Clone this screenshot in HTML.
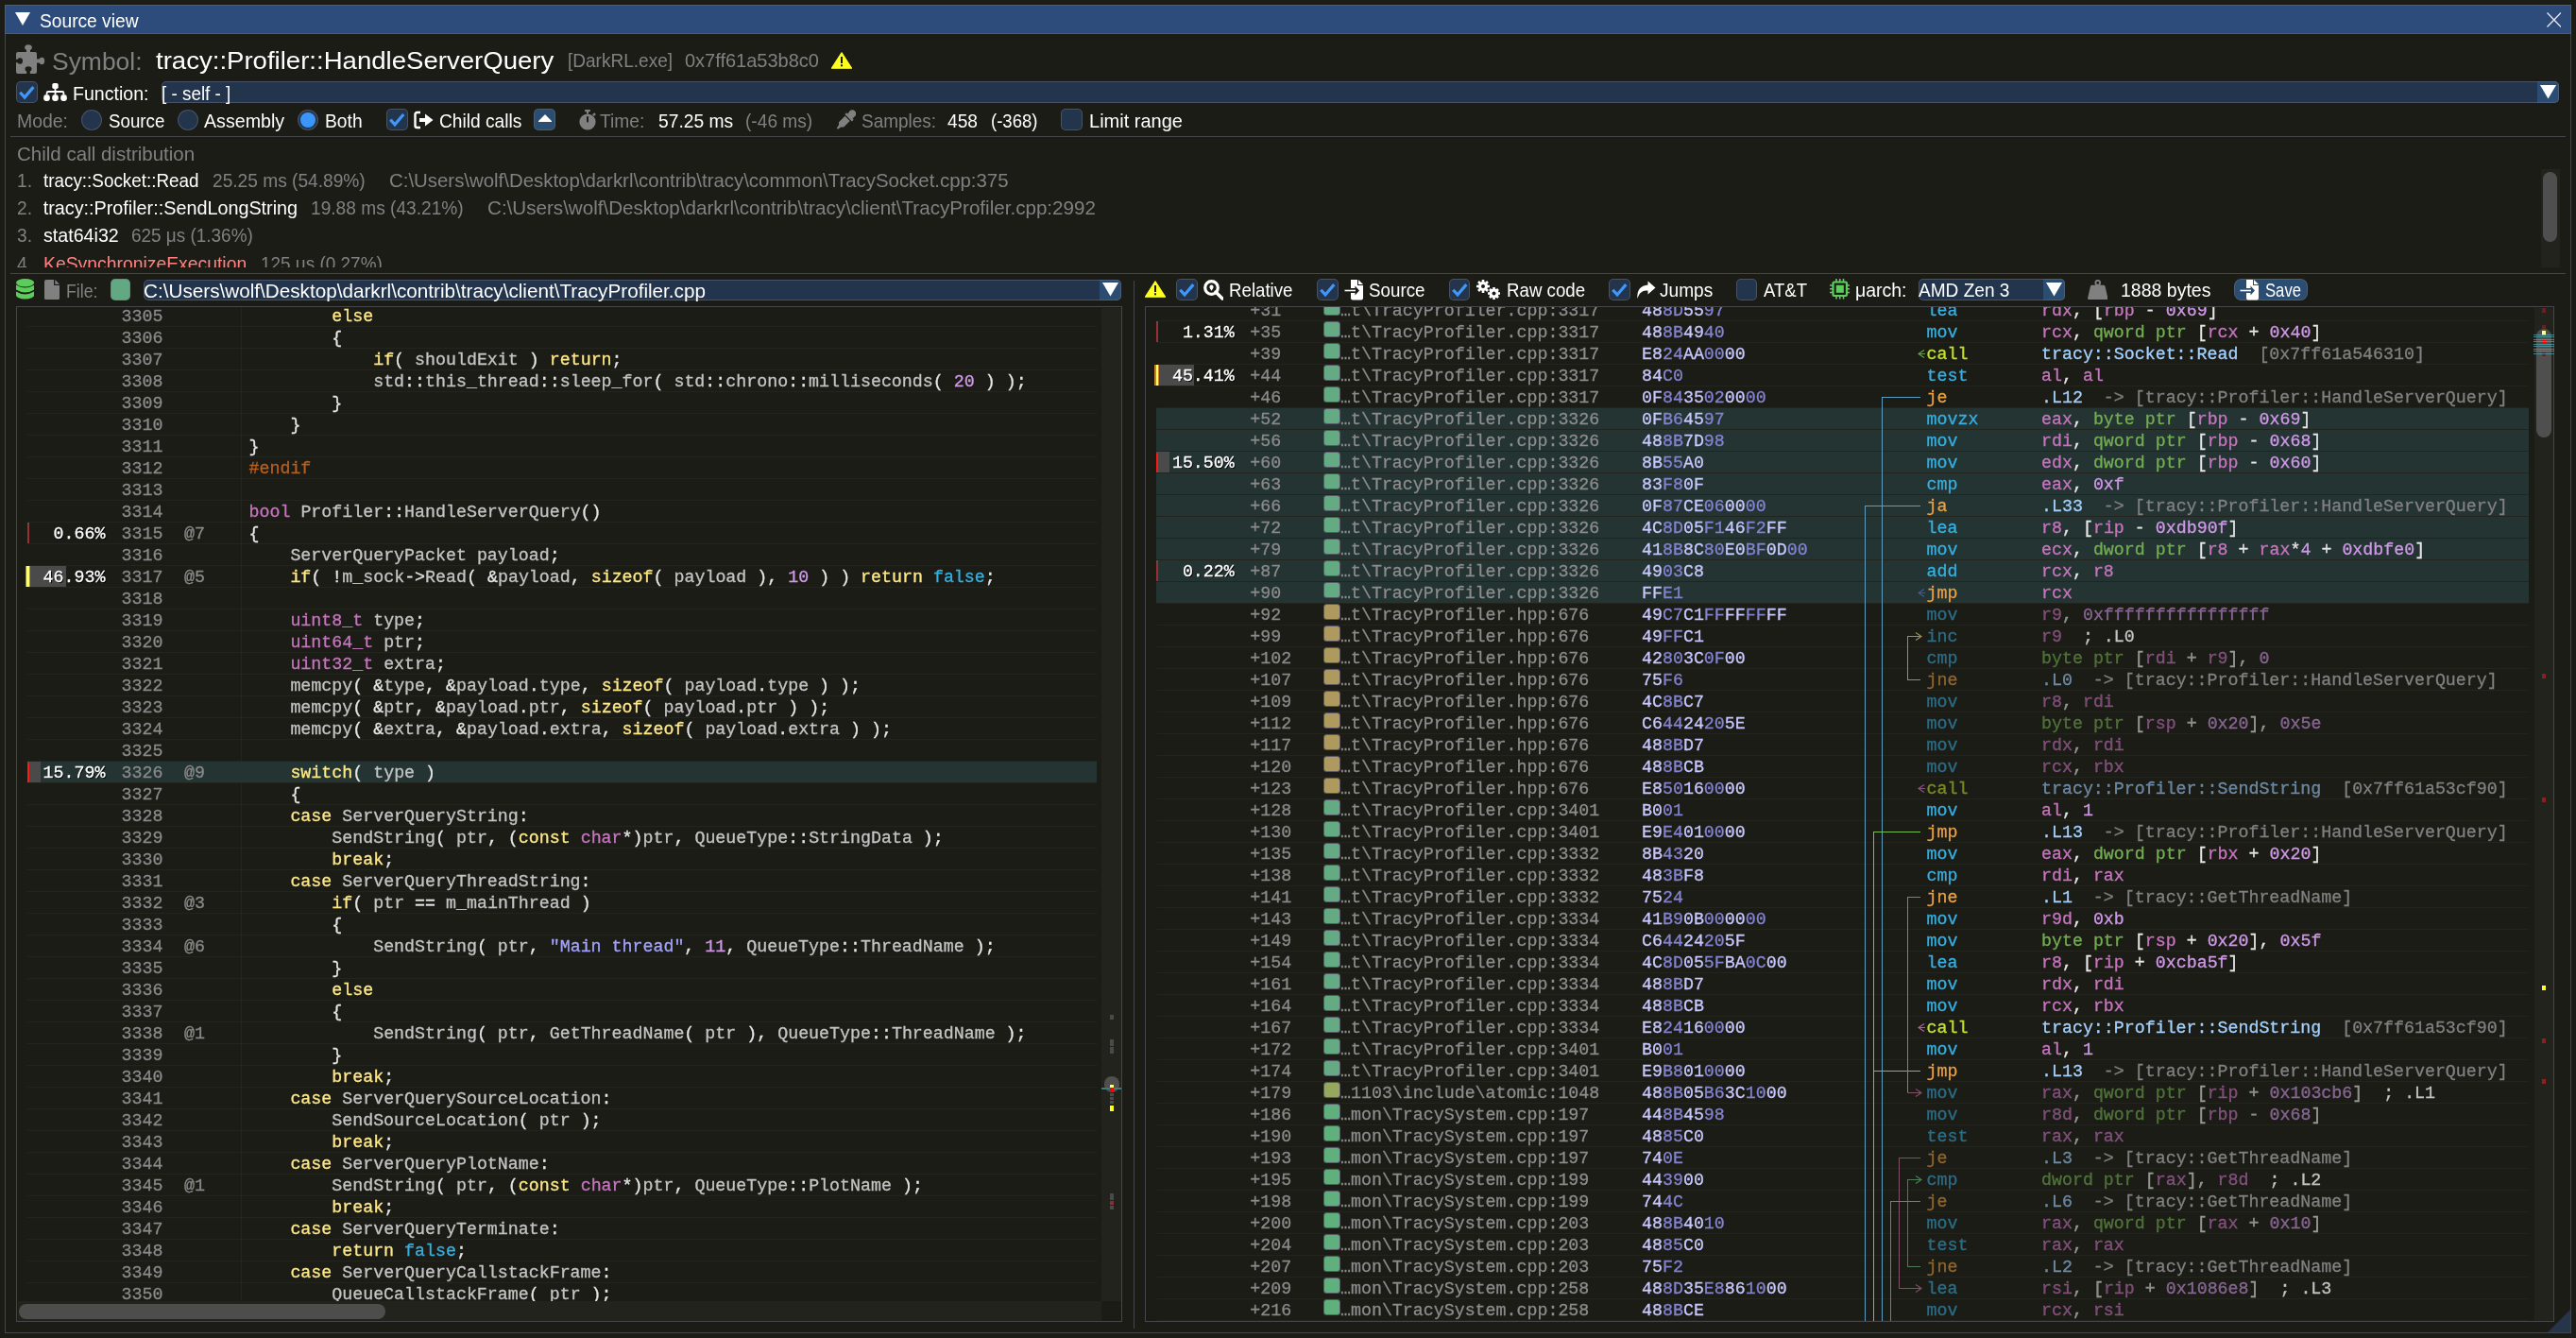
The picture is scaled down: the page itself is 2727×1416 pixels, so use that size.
<!DOCTYPE html><html><head><meta charset="utf-8"><style>
*{margin:0;padding:0}
html,body{width:2727px;height:1416px;overflow:hidden;background:#1c1c17}
body{position:relative}
div{position:absolute}
.s{font-family:"Liberation Sans",sans-serif;line-height:1;white-space:pre;transform-origin:0 0}
.m{font-family:"Liberation Mono",monospace;font-size:18.3px;line-height:1;white-space:pre;-webkit-text-stroke:0.3px}
.pc{font-family:"Liberation Mono",monospace;font-size:18.3px;line-height:1;white-space:pre;color:#fff;text-shadow:1px 1px 0 #000;-webkit-text-stroke:0.3px}
</style></head><body><div id="root" style="left:0;top:0;width:2727px;height:1416px;will-change:transform;overflow:hidden"><div style="left:0;top:0;width:2727px;height:1416px;background:#1c1c17"></div><div style="left:5.00px;top:5.00px;width:2717.00px;height:31.00px;background:#2d4b7b;"></div>
<div style="left:6.00px;top:35.00px;width:2715.00px;height:1.00px;background:rgba(110,110,128,0.5);"></div>
<div style="left:5.00px;top:5.00px;width:2717.00px;height:1406.00px;border:1px solid rgba(110,110,128,0.5);box-sizing:border-box"></div>
<svg style="position:absolute;left:16.00px;top:13.00px;" width="16.00" height="14.00" viewBox="0 0 16 14"><polygon points="0,0 16,0 8,14" fill="#fff"/></svg>
<div id="t0" class="s" style="left:42.00px;top:13.04px;font-size:19.8px;color:#fff;transform:scaleX(0.9698);">Source view</div>
<svg style="position:absolute;left:2695.50px;top:12.50px;" width="15.50" height="16.00" viewBox="0 0 15.5 16"><path d="M0.5,0.5 L15,15.5 M15,0.5 L0.5,15.5" stroke="#e8e8ee" stroke-width="1.3"/></svg>
<svg style="position:absolute;left:2697.00px;top:1386.00px;" width="24.00" height="24.00" viewBox="0 0 24 24"><polygon points="24,0 24,24 0,24" fill="#26354a"/></svg>
<svg style="position:absolute;left:16.00px;top:46.00px;" width="32.00" height="33.00" viewBox="0 0 32 33"><g fill="#808080"><rect x="1" y="9" width="22" height="23" rx="2"/><ellipse cx="14" cy="4.2" rx="3.8" ry="2.9"/><rect x="12" y="5" width="4" height="5"/><ellipse cx="28.3" cy="18.5" rx="2.9" ry="3.7"/><rect x="22" y="16.5" width="5" height="4"/></g><g fill="#1c1c17"><ellipse cx="5.2" cy="18.5" rx="2.8" ry="3.3"/><rect x="0" y="16.8" width="4" height="3.4"/><ellipse cx="14" cy="27" rx="3.5" ry="2.7"/><rect x="12.2" y="28" width="3.6" height="5"/></g></svg>
<div id="t1" class="s" style="left:55.20px;top:52.63px;font-size:25.6px;color:#808080;transform:scaleX(1.0330);">Symbol:</div>
<div id="t2" class="s" style="left:164.75px;top:52.33px;font-size:25.6px;color:#fff;transform:scaleX(1.0771);">tracy::Profiler::HandleServerQuery</div>
<div id="t3" class="s" style="left:601.00px;top:55.04px;font-size:19.8px;color:#808080;transform:scaleX(0.9616);">[DarkRL.exe]</div>
<div id="t4" class="s" style="left:725.00px;top:55.04px;font-size:19.8px;color:#808080;transform:scaleX(1.0111);">0x7ff61a53b8c0</div>
<svg style="position:absolute;left:880.30px;top:54.50px;" width="22.00" height="18.00" viewBox="0 0 22 18"><path d="M11,0.8 L21.5,17.2 L0.5,17.2 Z" fill="#ffff20" stroke="#ffff20" stroke-width="1.2" stroke-linejoin="round"/><rect x="10" y="5" width="2" height="7" fill="#1c1c17"/><rect x="10" y="13.3" width="2" height="2" fill="#1c1c17"/></svg>
<div style="left:17.00px;top:86.00px;width:22.70px;height:22.70px;background:#23354d;border:1px solid rgba(110,110,128,0.5);border-radius:5px;box-sizing:border-box"></div>
<svg style="position:absolute;left:17.00px;top:86.00px;" width="22.70" height="22.70" viewBox="0 0 22.7 22.7"><polyline points="4.31,11.80 9.08,17.02 18.39,6.13" fill="none" stroke="#4296fa" stroke-width="3.2"/></svg>
<svg style="position:absolute;left:45.50px;top:88.00px;" width="25.00" height="19.00" viewBox="0 0 25 19"><rect x="9.3" y="0" width="6.4" height="6" rx="1.8" fill="#fff"/><rect x="11.6" y="5" width="1.8" height="4" fill="#fff"/><path d="M3.6,12.5 V10.5 a1.5,1.5 0 0 1 1.5,-1.5 H19.9 a1.5,1.5 0 0 1 1.5,1.5 V12.5" fill="none" stroke="#fff" stroke-width="1.8"/><rect x="11.6" y="8.5" width="1.8" height="4" fill="#fff"/><rect x="0.2" y="12.3" width="6.6" height="6.6" rx="2.4" fill="#fff"/><rect x="9.2" y="12.3" width="6.6" height="6.6" rx="2.4" fill="#fff"/><rect x="18.2" y="12.3" width="6.6" height="6.6" rx="2.4" fill="#fff"/></svg>
<div id="t5" class="s" style="left:76.70px;top:89.84px;font-size:19.8px;color:#fff;transform:scaleX(0.9892);">Function:</div>
<div style="left:170.50px;top:86.00px;width:2538.10px;height:22.80px;background:#23354d;border:1px solid rgba(110,110,128,0.5);border-radius:5px;box-sizing:border-box;overflow:hidden"></div>
<div style="left:2686.10px;top:86.00px;width:22.50px;height:22.80px;background:#2b4d72;border:1px solid rgba(110,110,128,0.5);border-left:none;border-radius:0 5px 5px 0;box-sizing:border-box"></div>
<svg style="position:absolute;left:2688.85px;top:90.20px;" width="17.00" height="14.50" viewBox="0 0 17 14.5"><polygon points="0,0 17,0 8.5,14.5" fill="#fff"/></svg>
<div id="t6" class="s" style="left:171.40px;top:89.54px;font-size:19.8px;color:#fff;transform:scaleX(0.9527);">[ - self - ]</div>
<div id="t7" class="s" style="left:18.30px;top:118.94px;font-size:19.8px;color:#808080;transform:scaleX(0.9821);">Mode:</div>
<div style="left:86.00px;top:116.00px;width:22.00px;height:22.00px;background:#23354d;border:1px solid rgba(110,110,128,0.5);border-radius:50%;box-sizing:border-box"></div>
<div id="t8" class="s" style="left:114.60px;top:118.94px;font-size:19.8px;color:#fff;transform:scaleX(0.9460);">Source</div>
<div style="left:188.00px;top:116.00px;width:22.00px;height:22.00px;background:#23354d;border:1px solid rgba(110,110,128,0.5);border-radius:50%;box-sizing:border-box"></div>
<div id="t9" class="s" style="left:216.10px;top:118.94px;font-size:19.8px;color:#fff;transform:scaleX(0.9924);">Assembly</div>
<div style="left:315.10px;top:116.00px;width:22.00px;height:22.00px;background:#23354d;border:1px solid rgba(110,110,128,0.5);border-radius:50%;box-sizing:border-box"></div>
<div style="left:318.00px;top:118.90px;width:16.20px;height:16.20px;background:#3a96fa;border-radius:50%"></div>
<div id="t10" class="s" style="left:343.90px;top:118.94px;font-size:19.8px;color:#fff;transform:scaleX(0.9729);">Both</div>
<div style="left:409.20px;top:115.00px;width:22.50px;height:22.50px;background:#23354d;border:1px solid rgba(110,110,128,0.5);border-radius:5px;box-sizing:border-box"></div>
<svg style="position:absolute;left:409.20px;top:115.00px;" width="22.50" height="22.50" viewBox="0 0 22.5 22.5"><polyline points="4.28,11.70 9.00,16.88 18.23,6.08" fill="none" stroke="#4296fa" stroke-width="3.2"/></svg>
<svg style="position:absolute;left:437.80px;top:115.50px;" width="21.00" height="22.00" viewBox="0 0 21 22"><path d="M7,3 H3.5 a2,2 0 0 0 -2,2 V17 a2,2 0 0 0 2,2 H7" fill="none" stroke="#fff" stroke-width="2.4"/><path d="M6,9 H12 V4.5 L20.5,11 L12,17.5 V13 H6 Z" fill="#fff"/></svg>
<div id="t11" class="s" style="left:465.10px;top:118.94px;font-size:19.8px;color:#fff;transform:scaleX(0.9683);">Child calls</div>
<div style="left:565.10px;top:115.00px;width:22.70px;height:22.50px;background:#2b4d72;border:1px solid rgba(110,110,128,0.5);border-radius:5px;box-sizing:border-box"></div>
<svg style="position:absolute;left:569.50px;top:120.60px;" width="14.00" height="8.00" viewBox="0 0 14 8"><path d="M0.5,7.5 L7,0.8 L13.5,7.5 Z" fill="#fff" stroke="#fff" stroke-linejoin="round" stroke-width="1.2"/></svg>
<svg style="position:absolute;left:612.50px;top:115.50px;" width="18.00" height="22.00" viewBox="0 0 18 22"><rect x="6" y="0" width="6" height="2.2" rx="0.8" fill="#808080"/><rect x="8" y="1.5" width="2" height="3" fill="#808080"/><circle cx="9" cy="13" r="8.6" fill="#808080"/><rect x="8" y="7" width="2" height="6.5" rx="1" fill="#1c1c17"/><rect x="14.8" y="3.6" width="2.5" height="3" transform="rotate(45 16 5)" fill="#808080"/></svg>
<div id="t12" class="s" style="left:635.40px;top:118.94px;font-size:19.8px;color:#808080;transform:scaleX(0.9729);">Time:</div>
<div id="t13" class="s" style="left:696.80px;top:118.94px;font-size:19.8px;color:#fff;transform:scaleX(0.9733);">57.25 ms</div>
<div id="t14" class="s" style="left:789.30px;top:118.94px;font-size:19.8px;color:#808080;transform:scaleX(0.9669);">(-46 ms)</div>
<svg style="position:absolute;left:884.80px;top:116.00px;" width="21.50" height="21.50" viewBox="0 0 21.5 21.5"><path d="M14.5,1.5 a3.5,3.5 0 0 1 5.5,5.5 l-2.5,2.5 l1.2,1.2 l-1.8,1.8 l-7.5,-7.5 l1.8,-1.8 l1.2,1.2 z" fill="#808080"/><path d="M9.5,6.8 L3,13.3 v3 L0.8,19.5 l1.2,1.2 L5.2,18.5 h3 L14.7,12 Z" fill="#808080"/></svg>
<div id="t15" class="s" style="left:911.60px;top:118.94px;font-size:19.8px;color:#808080;transform:scaleX(0.9579);">Samples:</div>
<div id="t16" class="s" style="left:1003.20px;top:118.94px;font-size:19.8px;color:#fff;transform:scaleX(0.9692);">458</div>
<div id="t17" class="s" style="left:1048.80px;top:118.94px;font-size:19.8px;color:#fff;transform:scaleX(0.9378);">(-368)</div>
<div style="left:1123.20px;top:115.00px;width:22.70px;height:22.70px;background:#23354d;border:1px solid rgba(110,110,128,0.5);border-radius:5px;box-sizing:border-box"></div>
<div id="t18" class="s" style="left:1152.70px;top:118.94px;font-size:19.8px;color:#fff;transform:scaleX(1.0117);">Limit range</div>
<div style="left:11.00px;top:144.00px;width:2705.00px;height:1.00px;background:rgba(110,110,128,0.5);"></div>
<div id="t19" class="s" style="left:17.60px;top:154.14px;font-size:19.8px;color:#808080;transform:scaleX(1.0374);">Child call distribution</div>
<div style="left:6px;top:176px;width:2710px;height:107px;overflow:hidden">
<div id="t20" class="s" style="left:11.60px;top:5.84px;font-size:19.8px;color:#808080;transform:scaleX(0.9700);">1.</div>
<div id="t21" class="s" style="left:39.70px;top:5.84px;font-size:19.8px;color:#fff;transform:scaleX(0.9535);">tracy::Socket::Read</div>
<div id="t22" class="s" style="left:218.70px;top:5.84px;font-size:19.8px;color:#808080;transform:scaleX(0.9674);">25.25 ms (54.89%)</div>
<div id="t23" class="s" style="left:405.80px;top:5.84px;font-size:19.8px;color:#808080;transform:scaleX(1.0311);">C:\Users\wolf\Desktop\darkrl\contrib\tracy\common\TracySocket.cpp:375</div>
<div id="t24" class="s" style="left:11.60px;top:35.14px;font-size:19.8px;color:#808080;transform:scaleX(0.9700);">2.</div>
<div id="t25" class="s" style="left:39.70px;top:35.14px;font-size:19.8px;color:#fff;">tracy::Profiler::SendLongString</div>
<div id="t26" class="s" style="left:322.50px;top:35.14px;font-size:19.8px;color:#808080;transform:scaleX(0.9674);">19.88 ms (43.21%)</div>
<div id="t27" class="s" style="left:509.90px;top:35.14px;font-size:19.8px;color:#808080;transform:scaleX(1.0416);">C:\Users\wolf\Desktop\darkrl\contrib\tracy\client\TracyProfiler.cpp:2992</div>
<div id="t28" class="s" style="left:11.60px;top:64.44px;font-size:19.8px;color:#808080;transform:scaleX(0.9700);">3.</div>
<div id="t29" class="s" style="left:39.70px;top:64.44px;font-size:19.8px;color:#fff;transform:scaleX(0.9938);">stat64i32</div>
<div id="t30" class="s" style="left:133.40px;top:64.44px;font-size:19.8px;color:#808080;transform:scaleX(0.9572);">625 μs (1.36%)</div>
<div id="t31" class="s" style="left:11.60px;top:93.74px;font-size:19.8px;color:#808080;transform:scaleX(0.9700);">4.</div>
<div id="t32" class="s" style="left:39.70px;top:93.74px;font-size:19.8px;color:#ff8080;transform:scaleX(0.9785);">KeSynchronizeExecution</div>
<div id="t33" class="s" style="left:269.60px;top:93.74px;font-size:19.8px;color:#808080;transform:scaleX(0.9572);">125 μs (0.27%)</div>
</div>
<div style="left:2689.50px;top:179.00px;width:20.50px;height:104.00px;background:rgba(255,255,255,0.03);"></div>
<div style="left:2692.00px;top:182.00px;width:15.00px;height:73.50px;background:#4f4f4f;border-radius:8px"></div>
<div style="left:11.00px;top:289.00px;width:2705.00px;height:1.00px;background:rgba(110,110,128,0.5);"></div>
<svg style="position:absolute;left:16.80px;top:295.30px;" width="19.20" height="21.50" viewBox="0 0 19.2 21.5"><ellipse cx="9.6" cy="4.2" rx="9.6" ry="4.2" fill="#5ccc5c"/><path d="M0,6.6 Q9.6,12.6 19.2,6.6 V11.6 Q9.6,17.6 0,11.6 Z" fill="#5ccc5c"/><path d="M0,13.4 Q9.6,19.4 19.2,13.4 V17.4 A9.6,4.1 0 0 1 0,17.4 Z" fill="#5ccc5c"/></svg>
<svg style="position:absolute;left:46.90px;top:295.50px;" width="16.00" height="21.30" viewBox="0 0 16 21.3"><path d="M2,0 H10 V6 H16 V19.3 a2,2 0 0 1 -2,2 H2 a2,2 0 0 1 -2,-2 V2 a2,2 0 0 1 2,-2 Z" fill="#808080"/><path d="M11.3,0 L16,4.7 H11.3 Z" fill="#808080"/></svg>
<div id="t34" class="s" style="left:69.90px;top:298.94px;font-size:19.8px;color:#808080;transform:scaleX(0.8963);">File:</div>
<div style="left:116.60px;top:295.40px;width:21.70px;height:22.20px;background:#62a882;border:1px solid rgba(110,110,128,0.5);border-radius:5px;box-sizing:border-box"></div>
<div style="left:151.50px;top:295.60px;width:1035.10px;height:22.00px;background:#23354d;border:1px solid rgba(110,110,128,0.5);border-radius:5px;box-sizing:border-box;overflow:hidden"></div>
<div style="left:1164.10px;top:295.60px;width:22.50px;height:22.00px;background:#2b4d72;border:1px solid rgba(110,110,128,0.5);border-left:none;border-radius:0 5px 5px 0;box-sizing:border-box"></div>
<svg style="position:absolute;left:1166.85px;top:299.40px;" width="17.00" height="14.50" viewBox="0 0 17 14.5"><polygon points="0,0 17,0 8.5,14.5" fill="#fff"/></svg>
<div id="t35" class="s" style="left:152.10px;top:298.94px;font-size:19.8px;color:#fff;transform:scaleX(1.0462);">C:\Users\wolf\Desktop\darkrl\contrib\tracy\client\TracyProfiler.cpp</div>
<div style="left:1200.00px;top:296.50px;width:1.00px;height:1109.20px;background:rgba(110,110,128,0.5);"></div>
<svg style="position:absolute;left:1211.80px;top:297.20px;" width="22.00" height="18.00" viewBox="0 0 22 18"><path d="M11,0.8 L21.5,17.2 L0.5,17.2 Z" fill="#ffff20" stroke="#ffff20" stroke-width="1.2" stroke-linejoin="round"/><rect x="10" y="5" width="2" height="7" fill="#1c1c17"/><rect x="10" y="13.3" width="2" height="2" fill="#1c1c17"/></svg>
<div style="left:1245.20px;top:295.20px;width:22.60px;height:22.60px;background:#23354d;border:1px solid rgba(110,110,128,0.5);border-radius:5px;box-sizing:border-box"></div>
<svg style="position:absolute;left:1245.20px;top:295.20px;" width="22.60" height="22.60" viewBox="0 0 22.6 22.6"><polyline points="4.29,11.75 9.04,16.95 18.31,6.10" fill="none" stroke="#4296fa" stroke-width="3.2"/></svg>
<svg style="position:absolute;left:1273.90px;top:296.00px;" width="21.50" height="21.50" viewBox="0 0 21.5 21.5"><circle cx="8.5" cy="8.5" r="6.8" fill="none" stroke="#fff" stroke-width="3.2"/><path d="M13,13 L20,20" stroke="#fff" stroke-width="3.4" stroke-linecap="round"/><circle cx="8.5" cy="7.5" r="2" fill="#fff"/><path d="M6.3,8.3 L8.5,11.8 L10.7,8.3 Z" fill="#fff"/></svg>
<div id="t36" class="s" style="left:1301.10px;top:297.94px;font-size:19.8px;color:#fff;transform:scaleX(0.9445);">Relative</div>
<div style="left:1394.30px;top:295.20px;width:22.60px;height:22.60px;background:#23354d;border:1px solid rgba(110,110,128,0.5);border-radius:5px;box-sizing:border-box"></div>
<svg style="position:absolute;left:1394.30px;top:295.20px;" width="22.60" height="22.60" viewBox="0 0 22.6 22.6"><polyline points="4.29,11.75 9.04,16.95 18.31,6.10" fill="none" stroke="#4296fa" stroke-width="3.2"/></svg>
<svg style="position:absolute;left:1423.00px;top:296.00px;" width="21.00" height="21.50" viewBox="0 0 21 21.5"><path d="M7,0 H14 V6 H20 V19.5 a2,2 0 0 1 -2,2 H9 a2,2 0 0 1 -2,-2 V14 H11.5 V16.5 L16,11.5 L11.5,6.5 V9 H7 Z" fill="#fff"/><path d="M15,0 L20,5 H15 Z" fill="#fff"/><path d="M0.5,11.5 H12" stroke="#fff" stroke-width="1.6"/></svg>
<div id="t37" class="s" style="left:1449.40px;top:297.94px;font-size:19.8px;color:#fff;transform:scaleX(0.9492);">Source</div>
<div style="left:1533.90px;top:295.20px;width:22.60px;height:22.60px;background:#23354d;border:1px solid rgba(110,110,128,0.5);border-radius:5px;box-sizing:border-box"></div>
<svg style="position:absolute;left:1533.90px;top:295.20px;" width="22.60" height="22.60" viewBox="0 0 22.6 22.6"><polyline points="4.29,11.75 9.04,16.95 18.31,6.10" fill="none" stroke="#4296fa" stroke-width="3.2"/></svg>
<svg style="position:absolute;left:1562.90px;top:296.00px;" width="26.00" height="21.50" viewBox="0 0 26 21.5"><g fill="#fff"><circle cx="7" cy="7" r="5"/><circle cx="18.5" cy="14.5" r="5"/></g><g stroke="#fff" stroke-width="2.6"><path d="M7,0 V14 M0,7 H14 M2,2 L12,12 M12,2 L2,12"/><path d="M18.5,8 V21 M12,14.5 H25 M14,10 L23,19 M23,10 L14,19"/></g><circle cx="7" cy="7" r="2" fill="#1c1c17"/><circle cx="18.5" cy="14.5" r="2" fill="#1c1c17"/></svg>
<div id="t38" class="s" style="left:1594.60px;top:297.94px;font-size:19.8px;color:#fff;transform:scaleX(0.9447);">Raw code</div>
<div style="left:1703.20px;top:295.20px;width:22.60px;height:22.60px;background:#23354d;border:1px solid rgba(110,110,128,0.5);border-radius:5px;box-sizing:border-box"></div>
<svg style="position:absolute;left:1703.20px;top:295.20px;" width="22.60" height="22.60" viewBox="0 0 22.6 22.6"><polyline points="4.29,11.75 9.04,16.95 18.31,6.10" fill="none" stroke="#4296fa" stroke-width="3.2"/></svg>
<svg style="position:absolute;left:1731.80px;top:297.00px;" width="21.00" height="20.00" viewBox="0 0 21 20"><path d="M12.5,0.5 L20.5,7.5 L12.5,14.5 V10.5 C7,10.5 3.5,12 1.5,19 C0.5,10 5,5 12.5,4.5 Z" fill="#fff"/></svg>
<div id="t39" class="s" style="left:1757.10px;top:297.94px;font-size:19.8px;color:#fff;transform:scaleX(0.9663);">Jumps</div>
<div style="left:1837.90px;top:295.20px;width:22.60px;height:22.60px;background:#23354d;border:1px solid rgba(110,110,128,0.5);border-radius:5px;box-sizing:border-box"></div>
<div id="t40" class="s" style="left:1867.00px;top:297.94px;font-size:19.8px;color:#fff;transform:scaleX(0.9370);">AT&amp;T</div>
<svg style="position:absolute;left:1936.90px;top:295.20px;" width="21.50" height="21.50" viewBox="0 0 21.5 21.5"><rect x="3.5" y="3.5" width="14.5" height="14.5" rx="1.5" fill="none" stroke="#5ccc5c" stroke-width="2.2"/><rect x="6.8" y="6.8" width="8" height="8" fill="#5ccc5c"/><g stroke="#5ccc5c" stroke-width="1.6"><path d="M7,0 V3.5 M10.75,0 V3.5 M14.5,0 V3.5 M7,18 V21.5 M10.75,18 V21.5 M14.5,18 V21.5 M0,7 H3.5 M0,10.75 H3.5 M0,14.5 H3.5 M18,7 H21.5 M18,10.75 H21.5 M18,14.5 H21.5"/></g></svg>
<div id="t41" class="s" style="left:1963.80px;top:297.94px;font-size:19.8px;color:#fff;transform:scaleX(0.9842);">μarch:</div>
<div style="left:2031.40px;top:295.20px;width:154.50px;height:22.60px;background:#23354d;border:1px solid rgba(110,110,128,0.5);border-radius:5px;box-sizing:border-box;overflow:hidden"></div>
<div style="left:2163.40px;top:295.20px;width:22.50px;height:22.60px;background:#2b4d72;border:1px solid rgba(110,110,128,0.5);border-left:none;border-radius:0 5px 5px 0;box-sizing:border-box"></div>
<svg style="position:absolute;left:2166.15px;top:299.30px;" width="17.00" height="14.50" viewBox="0 0 17 14.5"><polygon points="0,0 17,0 8.5,14.5" fill="#fff"/></svg>
<div id="t42" class="s" style="left:2031.40px;top:297.94px;font-size:19.8px;color:#fff;transform:scaleX(0.9635);">AMD Zen 3</div>
<svg style="position:absolute;left:2209.70px;top:295.60px;" width="21.50" height="21.20" viewBox="0 0 21.5 21.2"><circle cx="10.75" cy="3.2" r="2.4" fill="none" stroke="#808080" stroke-width="1.8"/><path d="M4.5,5.8 H17 a1.5,1.5 0 0 1 1.5,1.2 L21.3,19 a1.6,1.6 0 0 1 -1.5,2.2 H1.7 a1.6,1.6 0 0 1 -1.5,-2.2 L3,7 a1.5,1.5 0 0 1 1.5,-1.2 Z" fill="#808080"/></svg>
<div id="t43" class="s" style="left:2245.00px;top:297.94px;font-size:19.8px;color:#fff;transform:scaleX(0.9856);">1888 bytes</div>
<div style="left:2365.10px;top:295.20px;width:77.70px;height:22.60px;background:#2b4d72;border:1px solid rgba(110,110,128,0.5);border-radius:8px;box-sizing:border-box"></div>
<svg style="position:absolute;left:2370.70px;top:296.00px;" width="21.50" height="21.50" viewBox="0 0 21.5 21.5"><path d="M7,0 H14 V6 H20 V19.5 a2,2 0 0 1 -2,2 H9 a2,2 0 0 1 -2,-2 V14 H11.5 V16.5 L16,11.5 L11.5,6.5 V9 H7 Z" fill="#fff"/><path d="M15,0 L20,5 H15 Z" fill="#fff"/><path d="M0.5,11.5 H12" stroke="#fff" stroke-width="1.6"/></svg>
<div id="t44" class="s" style="left:2397.90px;top:297.94px;font-size:19.8px;color:#fff;transform:scaleX(0.8427);">Save</div>
<div style="left:17.00px;top:324.00px;width:1171.00px;height:1075.00px;border:1px solid rgba(110,110,128,0.5);box-sizing:border-box"></div>
<div style="left:18px;top:325px;width:1148px;height:1052px;overflow:hidden">
<div style="left:237.00px;top:0.00px;width:1.00px;height:1052.00px;background:rgba(255,255,255,0.035);"></div>
<div style="left:11.00px;top:20.00px;width:1132.00px;height:1.00px;background:rgba(255,255,255,0.035);"></div>
<div class="m" style="left:110.50px;top:1.07px;"><span style="color:#8a8a8a">3305</span></div>
<div class="m" style="left:245.50px;top:1.07px;">        <span style="color:#ffe887">else</span></div>
<div style="left:11.00px;top:43.00px;width:1132.00px;height:1.00px;background:rgba(255,255,255,0.035);"></div>
<div class="m" style="left:110.50px;top:24.07px;"><span style="color:#8a8a8a">3306</span></div>
<div class="m" style="left:245.50px;top:24.07px;">        <span style="color:#e6e6e6">{</span></div>
<div style="left:11.00px;top:66.00px;width:1132.00px;height:1.00px;background:rgba(255,255,255,0.035);"></div>
<div class="m" style="left:110.50px;top:47.07px;"><span style="color:#8a8a8a">3307</span></div>
<div class="m" style="left:245.50px;top:47.07px;">            <span style="color:#ffe887">if</span><span style="color:#e6e6e6">(</span> <span style="color:#c4c4c4">shouldExit</span> <span style="color:#e6e6e6">)</span> <span style="color:#ffe887">return</span><span style="color:#e6e6e6">;</span></div>
<div style="left:11.00px;top:89.00px;width:1132.00px;height:1.00px;background:rgba(255,255,255,0.035);"></div>
<div class="m" style="left:110.50px;top:70.07px;"><span style="color:#8a8a8a">3308</span></div>
<div class="m" style="left:245.50px;top:70.07px;">            <span style="color:#c4c4c4">std</span><span style="color:#e6e6e6">:</span><span style="color:#e6e6e6">:</span><span style="color:#c4c4c4">this_thread</span><span style="color:#e6e6e6">:</span><span style="color:#e6e6e6">:</span><span style="color:#c4c4c4">sleep_for</span><span style="color:#e6e6e6">(</span> <span style="color:#c4c4c4">std</span><span style="color:#e6e6e6">:</span><span style="color:#e6e6e6">:</span><span style="color:#c4c4c4">chrono</span><span style="color:#e6e6e6">:</span><span style="color:#e6e6e6">:</span><span style="color:#c4c4c4">milliseconds</span><span style="color:#e6e6e6">(</span> <span style="color:#cf99e8">20</span> <span style="color:#e6e6e6">)</span> <span style="color:#e6e6e6">)</span><span style="color:#e6e6e6">;</span></div>
<div style="left:11.00px;top:112.00px;width:1132.00px;height:1.00px;background:rgba(255,255,255,0.035);"></div>
<div class="m" style="left:110.50px;top:93.07px;"><span style="color:#8a8a8a">3309</span></div>
<div class="m" style="left:245.50px;top:93.07px;">        <span style="color:#e6e6e6">}</span></div>
<div style="left:11.00px;top:135.00px;width:1132.00px;height:1.00px;background:rgba(255,255,255,0.035);"></div>
<div class="m" style="left:110.50px;top:116.07px;"><span style="color:#8a8a8a">3310</span></div>
<div class="m" style="left:245.50px;top:116.07px;">    <span style="color:#e6e6e6">}</span></div>
<div style="left:11.00px;top:158.00px;width:1132.00px;height:1.00px;background:rgba(255,255,255,0.035);"></div>
<div class="m" style="left:110.50px;top:139.07px;"><span style="color:#8a8a8a">3311</span></div>
<div class="m" style="left:245.50px;top:139.07px;"><span style="color:#e6e6e6">}</span></div>
<div style="left:11.00px;top:181.00px;width:1132.00px;height:1.00px;background:rgba(255,255,255,0.035);"></div>
<div class="m" style="left:110.50px;top:162.07px;"><span style="color:#8a8a8a">3312</span></div>
<div class="m" style="left:245.50px;top:162.07px;"><span style="color:#b85f1f">#endif</span></div>
<div style="left:11.00px;top:204.00px;width:1132.00px;height:1.00px;background:rgba(255,255,255,0.035);"></div>
<div class="m" style="left:110.50px;top:185.07px;"><span style="color:#8a8a8a">3313</span></div>
<div style="left:11.00px;top:227.00px;width:1132.00px;height:1.00px;background:rgba(255,255,255,0.035);"></div>
<div class="m" style="left:110.50px;top:208.07px;"><span style="color:#8a8a8a">3314</span></div>
<div class="m" style="left:245.50px;top:208.07px;"><span style="color:#c775bf">bool</span> <span style="color:#c4c4c4">Profiler</span><span style="color:#e6e6e6">:</span><span style="color:#e6e6e6">:</span><span style="color:#c4c4c4">HandleServerQuery</span><span style="color:#e6e6e6">(</span><span style="color:#e6e6e6">)</span></div>
<div style="left:11.00px;top:250.00px;width:1132.00px;height:1.00px;background:rgba(255,255,255,0.035);"></div>
<div style="left:11.00px;top:229.50px;width:1.50px;height:20.50px;background:#983232;"></div>
<div style="left:11.00px;top:228.00px;width:1.50px;height:1.50px;background:#555;"></div>
<div class="pc" style="left:38.60px;top:231.07px;">0.66%</div>
<div class="m" style="left:110.50px;top:231.07px;"><span style="color:#8a8a8a">3315</span></div>
<div class="m" style="left:177.00px;top:231.07px;"><span style="color:#8a8a8a">@7</span></div>
<div class="m" style="left:245.50px;top:231.07px;"><span style="color:#e6e6e6">{</span></div>
<div style="left:11.00px;top:273.00px;width:1132.00px;height:1.00px;background:rgba(255,255,255,0.035);"></div>
<div class="m" style="left:110.50px;top:254.07px;"><span style="color:#8a8a8a">3316</span></div>
<div class="m" style="left:245.50px;top:254.07px;">    <span style="color:#c4c4c4">ServerQueryPacket</span> <span style="color:#c4c4c4">payload</span><span style="color:#e6e6e6">;</span></div>
<div style="left:11.00px;top:296.00px;width:1132.00px;height:1.00px;background:rgba(255,255,255,0.035);"></div>
<div style="left:11.00px;top:274.00px;width:40.83px;height:22.00px;background:#4a4a4a;"></div>
<div style="left:9.00px;top:274.00px;width:4.70px;height:22.00px;background:#c8802a;"></div>
<div style="left:10.30px;top:274.00px;width:2.40px;height:22.00px;background:#ffff70;"></div>
<div class="pc" style="left:27.62px;top:277.07px;">46.93%</div>
<div class="m" style="left:110.50px;top:277.07px;"><span style="color:#8a8a8a">3317</span></div>
<div class="m" style="left:177.00px;top:277.07px;"><span style="color:#8a8a8a">@5</span></div>
<div class="m" style="left:245.50px;top:277.07px;">    <span style="color:#ffe887">if</span><span style="color:#e6e6e6">(</span> <span style="color:#e6e6e6">!</span><span style="color:#c4c4c4">m_sock</span><span style="color:#e6e6e6">-</span><span style="color:#e6e6e6">&gt;</span><span style="color:#c4c4c4">Read</span><span style="color:#e6e6e6">(</span> <span style="color:#e6e6e6">&amp;</span><span style="color:#c4c4c4">payload</span><span style="color:#e6e6e6">,</span> <span style="color:#ffe887">sizeof</span><span style="color:#e6e6e6">(</span> <span style="color:#c4c4c4">payload</span> <span style="color:#e6e6e6">)</span><span style="color:#e6e6e6">,</span> <span style="color:#cf99e8">10</span> <span style="color:#e6e6e6">)</span> <span style="color:#e6e6e6">)</span> <span style="color:#ffe887">return</span> <span style="color:#36b0e3">false</span><span style="color:#e6e6e6">;</span></div>
<div style="left:11.00px;top:319.00px;width:1132.00px;height:1.00px;background:rgba(255,255,255,0.035);"></div>
<div class="m" style="left:110.50px;top:300.07px;"><span style="color:#8a8a8a">3318</span></div>
<div style="left:11.00px;top:342.00px;width:1132.00px;height:1.00px;background:rgba(255,255,255,0.035);"></div>
<div class="m" style="left:110.50px;top:323.07px;"><span style="color:#8a8a8a">3319</span></div>
<div class="m" style="left:245.50px;top:323.07px;">    <span style="color:#c775bf">uint8_t</span> <span style="color:#c4c4c4">type</span><span style="color:#e6e6e6">;</span></div>
<div style="left:11.00px;top:365.00px;width:1132.00px;height:1.00px;background:rgba(255,255,255,0.035);"></div>
<div class="m" style="left:110.50px;top:346.07px;"><span style="color:#8a8a8a">3320</span></div>
<div class="m" style="left:245.50px;top:346.07px;">    <span style="color:#c775bf">uint64_t</span> <span style="color:#c4c4c4">ptr</span><span style="color:#e6e6e6">;</span></div>
<div style="left:11.00px;top:388.00px;width:1132.00px;height:1.00px;background:rgba(255,255,255,0.035);"></div>
<div class="m" style="left:110.50px;top:369.07px;"><span style="color:#8a8a8a">3321</span></div>
<div class="m" style="left:245.50px;top:369.07px;">    <span style="color:#c775bf">uint32_t</span> <span style="color:#c4c4c4">extra</span><span style="color:#e6e6e6">;</span></div>
<div style="left:11.00px;top:411.00px;width:1132.00px;height:1.00px;background:rgba(255,255,255,0.035);"></div>
<div class="m" style="left:110.50px;top:392.07px;"><span style="color:#8a8a8a">3322</span></div>
<div class="m" style="left:245.50px;top:392.07px;">    <span style="color:#c4c4c4">memcpy</span><span style="color:#e6e6e6">(</span> <span style="color:#e6e6e6">&amp;</span><span style="color:#c4c4c4">type</span><span style="color:#e6e6e6">,</span> <span style="color:#e6e6e6">&amp;</span><span style="color:#c4c4c4">payload</span><span style="color:#e6e6e6">.</span><span style="color:#c4c4c4">type</span><span style="color:#e6e6e6">,</span> <span style="color:#ffe887">sizeof</span><span style="color:#e6e6e6">(</span> <span style="color:#c4c4c4">payload</span><span style="color:#e6e6e6">.</span><span style="color:#c4c4c4">type</span> <span style="color:#e6e6e6">)</span> <span style="color:#e6e6e6">)</span><span style="color:#e6e6e6">;</span></div>
<div style="left:11.00px;top:434.00px;width:1132.00px;height:1.00px;background:rgba(255,255,255,0.035);"></div>
<div class="m" style="left:110.50px;top:415.07px;"><span style="color:#8a8a8a">3323</span></div>
<div class="m" style="left:245.50px;top:415.07px;">    <span style="color:#c4c4c4">memcpy</span><span style="color:#e6e6e6">(</span> <span style="color:#e6e6e6">&amp;</span><span style="color:#c4c4c4">ptr</span><span style="color:#e6e6e6">,</span> <span style="color:#e6e6e6">&amp;</span><span style="color:#c4c4c4">payload</span><span style="color:#e6e6e6">.</span><span style="color:#c4c4c4">ptr</span><span style="color:#e6e6e6">,</span> <span style="color:#ffe887">sizeof</span><span style="color:#e6e6e6">(</span> <span style="color:#c4c4c4">payload</span><span style="color:#e6e6e6">.</span><span style="color:#c4c4c4">ptr</span> <span style="color:#e6e6e6">)</span> <span style="color:#e6e6e6">)</span><span style="color:#e6e6e6">;</span></div>
<div style="left:11.00px;top:457.00px;width:1132.00px;height:1.00px;background:rgba(255,255,255,0.035);"></div>
<div class="m" style="left:110.50px;top:438.07px;"><span style="color:#8a8a8a">3324</span></div>
<div class="m" style="left:245.50px;top:438.07px;">    <span style="color:#c4c4c4">memcpy</span><span style="color:#e6e6e6">(</span> <span style="color:#e6e6e6">&amp;</span><span style="color:#c4c4c4">extra</span><span style="color:#e6e6e6">,</span> <span style="color:#e6e6e6">&amp;</span><span style="color:#c4c4c4">payload</span><span style="color:#e6e6e6">.</span><span style="color:#c4c4c4">extra</span><span style="color:#e6e6e6">,</span> <span style="color:#ffe887">sizeof</span><span style="color:#e6e6e6">(</span> <span style="color:#c4c4c4">payload</span><span style="color:#e6e6e6">.</span><span style="color:#c4c4c4">extra</span> <span style="color:#e6e6e6">)</span> <span style="color:#e6e6e6">)</span><span style="color:#e6e6e6">;</span></div>
<div style="left:11.00px;top:480.00px;width:1132.00px;height:1.00px;background:rgba(255,255,255,0.035);"></div>
<div class="m" style="left:110.50px;top:461.07px;"><span style="color:#8a8a8a">3325</span></div>
<div style="left:11.00px;top:481.00px;width:1132.00px;height:22.00px;background:#243432;"></div>
<div style="left:11.00px;top:503.00px;width:1132.00px;height:1.00px;background:rgba(255,255,255,0.035);"></div>
<div style="left:11.00px;top:481.00px;width:13.74px;height:22.00px;background:#4a4a4a;"></div>
<div style="left:11.00px;top:482.50px;width:1.50px;height:20.50px;background:#ff1a1a;"></div>
<div style="left:11.00px;top:481.00px;width:1.50px;height:1.50px;background:#555;"></div>
<div class="pc" style="left:27.62px;top:484.07px;">15.79%</div>
<div class="m" style="left:110.50px;top:484.07px;"><span style="color:#8a8a8a">3326</span></div>
<div class="m" style="left:177.00px;top:484.07px;"><span style="color:#8a8a8a">@9</span></div>
<div class="m" style="left:245.50px;top:484.07px;">    <span style="color:#ffe887">switch</span><span style="color:#e6e6e6">(</span> <span style="color:#c4c4c4">type</span> <span style="color:#e6e6e6">)</span></div>
<div style="left:11.00px;top:526.00px;width:1132.00px;height:1.00px;background:rgba(255,255,255,0.035);"></div>
<div class="m" style="left:110.50px;top:507.07px;"><span style="color:#8a8a8a">3327</span></div>
<div class="m" style="left:245.50px;top:507.07px;">    <span style="color:#e6e6e6">{</span></div>
<div style="left:11.00px;top:549.00px;width:1132.00px;height:1.00px;background:rgba(255,255,255,0.035);"></div>
<div class="m" style="left:110.50px;top:530.07px;"><span style="color:#8a8a8a">3328</span></div>
<div class="m" style="left:245.50px;top:530.07px;">    <span style="color:#ffe887">case</span> <span style="color:#c4c4c4">ServerQueryString</span><span style="color:#e6e6e6">:</span></div>
<div style="left:11.00px;top:572.00px;width:1132.00px;height:1.00px;background:rgba(255,255,255,0.035);"></div>
<div class="m" style="left:110.50px;top:553.07px;"><span style="color:#8a8a8a">3329</span></div>
<div class="m" style="left:245.50px;top:553.07px;">        <span style="color:#c4c4c4">SendString</span><span style="color:#e6e6e6">(</span> <span style="color:#c4c4c4">ptr</span><span style="color:#e6e6e6">,</span> <span style="color:#e6e6e6">(</span><span style="color:#ffe887">const</span> <span style="color:#c775bf">char</span><span style="color:#e6e6e6">*</span><span style="color:#e6e6e6">)</span><span style="color:#c4c4c4">ptr</span><span style="color:#e6e6e6">,</span> <span style="color:#c4c4c4">QueueType</span><span style="color:#e6e6e6">:</span><span style="color:#e6e6e6">:</span><span style="color:#c4c4c4">StringData</span> <span style="color:#e6e6e6">)</span><span style="color:#e6e6e6">;</span></div>
<div style="left:11.00px;top:595.00px;width:1132.00px;height:1.00px;background:rgba(255,255,255,0.035);"></div>
<div class="m" style="left:110.50px;top:576.07px;"><span style="color:#8a8a8a">3330</span></div>
<div class="m" style="left:245.50px;top:576.07px;">        <span style="color:#ffe887">break</span><span style="color:#e6e6e6">;</span></div>
<div style="left:11.00px;top:618.00px;width:1132.00px;height:1.00px;background:rgba(255,255,255,0.035);"></div>
<div class="m" style="left:110.50px;top:599.07px;"><span style="color:#8a8a8a">3331</span></div>
<div class="m" style="left:245.50px;top:599.07px;">    <span style="color:#ffe887">case</span> <span style="color:#c4c4c4">ServerQueryThreadString</span><span style="color:#e6e6e6">:</span></div>
<div style="left:11.00px;top:641.00px;width:1132.00px;height:1.00px;background:rgba(255,255,255,0.035);"></div>
<div class="m" style="left:110.50px;top:622.07px;"><span style="color:#8a8a8a">3332</span></div>
<div class="m" style="left:177.00px;top:622.07px;"><span style="color:#8a8a8a">@3</span></div>
<div class="m" style="left:245.50px;top:622.07px;">        <span style="color:#ffe887">if</span><span style="color:#e6e6e6">(</span> <span style="color:#c4c4c4">ptr</span> <span style="color:#e6e6e6">=</span><span style="color:#e6e6e6">=</span> <span style="color:#c4c4c4">m_mainThread</span> <span style="color:#e6e6e6">)</span></div>
<div style="left:11.00px;top:664.00px;width:1132.00px;height:1.00px;background:rgba(255,255,255,0.035);"></div>
<div class="m" style="left:110.50px;top:645.07px;"><span style="color:#8a8a8a">3333</span></div>
<div class="m" style="left:245.50px;top:645.07px;">        <span style="color:#e6e6e6">{</span></div>
<div style="left:11.00px;top:687.00px;width:1132.00px;height:1.00px;background:rgba(255,255,255,0.035);"></div>
<div class="m" style="left:110.50px;top:668.07px;"><span style="color:#8a8a8a">3334</span></div>
<div class="m" style="left:177.00px;top:668.07px;"><span style="color:#8a8a8a">@6</span></div>
<div class="m" style="left:245.50px;top:668.07px;">            <span style="color:#c4c4c4">SendString</span><span style="color:#e6e6e6">(</span> <span style="color:#c4c4c4">ptr</span><span style="color:#e6e6e6">,</span> <span style="color:#a3a3ff">"Main thread"</span><span style="color:#e6e6e6">,</span> <span style="color:#cf99e8">11</span><span style="color:#e6e6e6">,</span> <span style="color:#c4c4c4">QueueType</span><span style="color:#e6e6e6">:</span><span style="color:#e6e6e6">:</span><span style="color:#c4c4c4">ThreadName</span> <span style="color:#e6e6e6">)</span><span style="color:#e6e6e6">;</span></div>
<div style="left:11.00px;top:710.00px;width:1132.00px;height:1.00px;background:rgba(255,255,255,0.035);"></div>
<div class="m" style="left:110.50px;top:691.07px;"><span style="color:#8a8a8a">3335</span></div>
<div class="m" style="left:245.50px;top:691.07px;">        <span style="color:#e6e6e6">}</span></div>
<div style="left:11.00px;top:733.00px;width:1132.00px;height:1.00px;background:rgba(255,255,255,0.035);"></div>
<div class="m" style="left:110.50px;top:714.07px;"><span style="color:#8a8a8a">3336</span></div>
<div class="m" style="left:245.50px;top:714.07px;">        <span style="color:#ffe887">else</span></div>
<div style="left:11.00px;top:756.00px;width:1132.00px;height:1.00px;background:rgba(255,255,255,0.035);"></div>
<div class="m" style="left:110.50px;top:737.07px;"><span style="color:#8a8a8a">3337</span></div>
<div class="m" style="left:245.50px;top:737.07px;">        <span style="color:#e6e6e6">{</span></div>
<div style="left:11.00px;top:779.00px;width:1132.00px;height:1.00px;background:rgba(255,255,255,0.035);"></div>
<div class="m" style="left:110.50px;top:760.07px;"><span style="color:#8a8a8a">3338</span></div>
<div class="m" style="left:177.00px;top:760.07px;"><span style="color:#8a8a8a">@1</span></div>
<div class="m" style="left:245.50px;top:760.07px;">            <span style="color:#c4c4c4">SendString</span><span style="color:#e6e6e6">(</span> <span style="color:#c4c4c4">ptr</span><span style="color:#e6e6e6">,</span> <span style="color:#c4c4c4">GetThreadName</span><span style="color:#e6e6e6">(</span> <span style="color:#c4c4c4">ptr</span> <span style="color:#e6e6e6">)</span><span style="color:#e6e6e6">,</span> <span style="color:#c4c4c4">QueueType</span><span style="color:#e6e6e6">:</span><span style="color:#e6e6e6">:</span><span style="color:#c4c4c4">ThreadName</span> <span style="color:#e6e6e6">)</span><span style="color:#e6e6e6">;</span></div>
<div style="left:11.00px;top:802.00px;width:1132.00px;height:1.00px;background:rgba(255,255,255,0.035);"></div>
<div class="m" style="left:110.50px;top:783.07px;"><span style="color:#8a8a8a">3339</span></div>
<div class="m" style="left:245.50px;top:783.07px;">        <span style="color:#e6e6e6">}</span></div>
<div style="left:11.00px;top:825.00px;width:1132.00px;height:1.00px;background:rgba(255,255,255,0.035);"></div>
<div class="m" style="left:110.50px;top:806.07px;"><span style="color:#8a8a8a">3340</span></div>
<div class="m" style="left:245.50px;top:806.07px;">        <span style="color:#ffe887">break</span><span style="color:#e6e6e6">;</span></div>
<div style="left:11.00px;top:848.00px;width:1132.00px;height:1.00px;background:rgba(255,255,255,0.035);"></div>
<div class="m" style="left:110.50px;top:829.07px;"><span style="color:#8a8a8a">3341</span></div>
<div class="m" style="left:245.50px;top:829.07px;">    <span style="color:#ffe887">case</span> <span style="color:#c4c4c4">ServerQuerySourceLocation</span><span style="color:#e6e6e6">:</span></div>
<div style="left:11.00px;top:871.00px;width:1132.00px;height:1.00px;background:rgba(255,255,255,0.035);"></div>
<div class="m" style="left:110.50px;top:852.07px;"><span style="color:#8a8a8a">3342</span></div>
<div class="m" style="left:245.50px;top:852.07px;">        <span style="color:#c4c4c4">SendSourceLocation</span><span style="color:#e6e6e6">(</span> <span style="color:#c4c4c4">ptr</span> <span style="color:#e6e6e6">)</span><span style="color:#e6e6e6">;</span></div>
<div style="left:11.00px;top:894.00px;width:1132.00px;height:1.00px;background:rgba(255,255,255,0.035);"></div>
<div class="m" style="left:110.50px;top:875.07px;"><span style="color:#8a8a8a">3343</span></div>
<div class="m" style="left:245.50px;top:875.07px;">        <span style="color:#ffe887">break</span><span style="color:#e6e6e6">;</span></div>
<div style="left:11.00px;top:917.00px;width:1132.00px;height:1.00px;background:rgba(255,255,255,0.035);"></div>
<div class="m" style="left:110.50px;top:898.07px;"><span style="color:#8a8a8a">3344</span></div>
<div class="m" style="left:245.50px;top:898.07px;">    <span style="color:#ffe887">case</span> <span style="color:#c4c4c4">ServerQueryPlotName</span><span style="color:#e6e6e6">:</span></div>
<div style="left:11.00px;top:940.00px;width:1132.00px;height:1.00px;background:rgba(255,255,255,0.035);"></div>
<div class="m" style="left:110.50px;top:921.07px;"><span style="color:#8a8a8a">3345</span></div>
<div class="m" style="left:177.00px;top:921.07px;"><span style="color:#8a8a8a">@1</span></div>
<div class="m" style="left:245.50px;top:921.07px;">        <span style="color:#c4c4c4">SendString</span><span style="color:#e6e6e6">(</span> <span style="color:#c4c4c4">ptr</span><span style="color:#e6e6e6">,</span> <span style="color:#e6e6e6">(</span><span style="color:#ffe887">const</span> <span style="color:#c775bf">char</span><span style="color:#e6e6e6">*</span><span style="color:#e6e6e6">)</span><span style="color:#c4c4c4">ptr</span><span style="color:#e6e6e6">,</span> <span style="color:#c4c4c4">QueueType</span><span style="color:#e6e6e6">:</span><span style="color:#e6e6e6">:</span><span style="color:#c4c4c4">PlotName</span> <span style="color:#e6e6e6">)</span><span style="color:#e6e6e6">;</span></div>
<div style="left:11.00px;top:963.00px;width:1132.00px;height:1.00px;background:rgba(255,255,255,0.035);"></div>
<div class="m" style="left:110.50px;top:944.07px;"><span style="color:#8a8a8a">3346</span></div>
<div class="m" style="left:245.50px;top:944.07px;">        <span style="color:#ffe887">break</span><span style="color:#e6e6e6">;</span></div>
<div style="left:11.00px;top:986.00px;width:1132.00px;height:1.00px;background:rgba(255,255,255,0.035);"></div>
<div class="m" style="left:110.50px;top:967.07px;"><span style="color:#8a8a8a">3347</span></div>
<div class="m" style="left:245.50px;top:967.07px;">    <span style="color:#ffe887">case</span> <span style="color:#c4c4c4">ServerQueryTerminate</span><span style="color:#e6e6e6">:</span></div>
<div style="left:11.00px;top:1009.00px;width:1132.00px;height:1.00px;background:rgba(255,255,255,0.035);"></div>
<div class="m" style="left:110.50px;top:990.07px;"><span style="color:#8a8a8a">3348</span></div>
<div class="m" style="left:245.50px;top:990.07px;">        <span style="color:#ffe887">return</span> <span style="color:#36b0e3">false</span><span style="color:#e6e6e6">;</span></div>
<div style="left:11.00px;top:1032.00px;width:1132.00px;height:1.00px;background:rgba(255,255,255,0.035);"></div>
<div class="m" style="left:110.50px;top:1013.07px;"><span style="color:#8a8a8a">3349</span></div>
<div class="m" style="left:245.50px;top:1013.07px;">    <span style="color:#ffe887">case</span> <span style="color:#c4c4c4">ServerQueryCallstackFrame</span><span style="color:#e6e6e6">:</span></div>
<div style="left:11.00px;top:1055.00px;width:1132.00px;height:1.00px;background:rgba(255,255,255,0.035);"></div>
<div class="m" style="left:110.50px;top:1036.07px;"><span style="color:#8a8a8a">3350</span></div>
<div class="m" style="left:245.50px;top:1036.07px;">        <span style="color:#c4c4c4">QueueCallstackFrame</span><span style="color:#e6e6e6">(</span> <span style="color:#c4c4c4">ptr</span> <span style="color:#e6e6e6">)</span><span style="color:#e6e6e6">;</span></div>
</div>
<div style="left:1166.00px;top:325.50px;width:20.50px;height:1051.50px;background:rgba(255,255,255,0.03);"></div>
<div style="left:18.50px;top:1377.00px;width:1147.50px;height:20.50px;background:rgba(255,255,255,0.03);"></div>
<div style="left:20.00px;top:1379.50px;width:387.60px;height:16.00px;background:#4d4e4b;border-radius:8px"></div>
<div style="left:1175.00px;top:1074.00px;width:4.00px;height:5.00px;background:#4a4a4a;"></div>
<div style="left:1175.00px;top:1100.00px;width:4.00px;height:7.00px;background:#4a4a4a;"></div>
<div style="left:1175.00px;top:1108.00px;width:4.00px;height:7.00px;background:#4a4a4a;"></div>
<div style="left:1175.00px;top:1157.00px;width:4.00px;height:3.00px;background:#4a4a4a;"></div>
<div style="left:1175.00px;top:1161.00px;width:4.00px;height:3.00px;background:#4a4a4a;"></div>
<div style="left:1175.00px;top:1165.00px;width:4.00px;height:3.00px;background:#4a4a4a;"></div>
<div style="left:1175.00px;top:1263.00px;width:4.00px;height:7.00px;background:#4a4a4a;"></div>
<div style="left:1175.00px;top:1271.00px;width:4.00px;height:4.00px;background:#8a3030;"></div>
<div style="left:1175.00px;top:1276.00px;width:4.00px;height:4.00px;background:#4a4a4a;"></div>
<div style="left:1169.00px;top:1139.00px;width:16.00px;height:17.00px;background:rgba(90,90,90,0.8);border-radius:8px"></div>
<div style="left:1166.00px;top:1151.00px;width:21.00px;height:2.00px;background:#3d7a80;"></div>
<div style="left:1175.00px;top:1148.00px;width:4.00px;height:3.00px;background:#ffff90;"></div>
<div style="left:1175.00px;top:1151.00px;width:4.00px;height:5.00px;background:#ff0000;"></div>
<div style="left:1175.00px;top:1170.00px;width:4.00px;height:5.70px;background:#ffff20;"></div>
<div style="left:1212.00px;top:324.00px;width:1492.00px;height:1075.00px;border:1px solid rgba(110,110,128,0.5);box-sizing:border-box"></div>
<div style="left:1213px;top:325px;width:1470px;height:1072.5px;overflow:hidden">
<div style="left:12.00px;top:14.00px;width:1452.00px;height:1.00px;background:rgba(255,255,255,0.035);"></div>
<div class="m" style="left:110.30px;top:-4.93px;"><span style="color:#8a8a8a">+31</span></div>
<div style="left:188.30px;top:-8.20px;width:17.40px;height:17.50px;background:#64aa82;border:1px solid rgba(85,80,100,0.9);border-radius:3.5px;box-sizing:border-box"></div>
<div class="m" style="left:206.00px;top:-4.93px;"><span style="color:#8c8c8c">…t\TracyProfiler.cpp:3317</span></div>
<div class="m" style="left:525.00px;top:-4.93px;"><span style="color:#c8c8ff">48</span><span style="color:#8383d0">8D</span><span style="color:#c8c8ff">55</span><span style="color:#8383d0">97</span></div>
<div class="m" style="left:826.50px;top:-4.93px;"><span style="color:#36b0e3">lea</span></div>
<div class="m" style="left:948.00px;top:-4.93px;"><span style="color:#c775bf">rdx</span><span style="color:#e6e6e6">,</span> <span style="color:#e6e6e6">[</span><span style="color:#c775bf">rbp</span> <span style="color:#e6e6e6">-</span> <span style="color:#cf99e8">0x69</span><span style="color:#e6e6e6">]</span></div>
<div style="left:12.00px;top:37.00px;width:1452.00px;height:1.00px;background:rgba(255,255,255,0.035);"></div>
<div style="left:11.30px;top:15.00px;width:1.14px;height:22.00px;background:#4a4a4a;"></div>
<div style="left:11.30px;top:16.50px;width:1.50px;height:20.50px;background:#983232;"></div>
<div style="left:11.30px;top:15.00px;width:1.50px;height:1.50px;background:#555;"></div>
<div class="pc" style="left:38.90px;top:18.07px;">1.31%</div>
<div class="m" style="left:110.30px;top:18.07px;"><span style="color:#8a8a8a">+35</span></div>
<div style="left:188.30px;top:14.80px;width:17.40px;height:17.50px;background:#64aa82;border:1px solid rgba(85,80,100,0.9);border-radius:3.5px;box-sizing:border-box"></div>
<div class="m" style="left:206.00px;top:18.07px;"><span style="color:#8c8c8c">…t\TracyProfiler.cpp:3317</span></div>
<div class="m" style="left:525.00px;top:18.07px;"><span style="color:#c8c8ff">48</span><span style="color:#8383d0">8B</span><span style="color:#c8c8ff">49</span><span style="color:#8383d0">40</span></div>
<div class="m" style="left:826.50px;top:18.07px;"><span style="color:#36b0e3">mov</span></div>
<div class="m" style="left:948.00px;top:18.07px;"><span style="color:#c775bf">rcx</span><span style="color:#e6e6e6">,</span> <span style="color:#73ad52">qword</span> <span style="color:#73ad52">ptr</span> <span style="color:#e6e6e6">[</span><span style="color:#c775bf">rcx</span> <span style="color:#e6e6e6">+</span> <span style="color:#cf99e8">0x40</span><span style="color:#e6e6e6">]</span></div>
<div style="left:12.00px;top:60.00px;width:1452.00px;height:1.00px;background:rgba(255,255,255,0.035);"></div>
<div class="m" style="left:110.30px;top:41.07px;"><span style="color:#8a8a8a">+39</span></div>
<div style="left:188.30px;top:37.80px;width:17.40px;height:17.50px;background:#64aa82;border:1px solid rgba(85,80,100,0.9);border-radius:3.5px;box-sizing:border-box"></div>
<div class="m" style="left:206.00px;top:41.07px;"><span style="color:#8c8c8c">…t\TracyProfiler.cpp:3317</span></div>
<div class="m" style="left:525.00px;top:41.07px;"><span style="color:#c8c8ff">E8</span><span style="color:#8383d0">24</span><span style="color:#c8c8ff">AA</span><span style="color:#8383d0">00</span><span style="color:#c8c8ff">00</span></div>
<div class="m" style="left:826.50px;top:41.07px;"><span style="color:#c3e22e">call</span></div>
<div class="m" style="left:948.00px;top:41.07px;"><span style="color:#a3d1ff">tracy::Socket::Read</span><span style="color:#808080">  [0x7ff61a546310]</span></div>
<div style="left:12.00px;top:83.00px;width:1452.00px;height:1.00px;background:rgba(255,255,255,0.035);"></div>
<div style="left:11.30px;top:61.00px;width:39.51px;height:22.00px;background:#4a4a4a;"></div>
<div style="left:9.30px;top:61.00px;width:4.70px;height:22.00px;background:#c8802a;"></div>
<div style="left:10.60px;top:61.00px;width:2.40px;height:22.00px;background:#ffff70;"></div>
<div class="pc" style="left:27.92px;top:64.07px;">45.41%</div>
<div class="m" style="left:110.30px;top:64.07px;"><span style="color:#8a8a8a">+44</span></div>
<div style="left:188.30px;top:60.80px;width:17.40px;height:17.50px;background:#64aa82;border:1px solid rgba(85,80,100,0.9);border-radius:3.5px;box-sizing:border-box"></div>
<div class="m" style="left:206.00px;top:64.07px;"><span style="color:#8c8c8c">…t\TracyProfiler.cpp:3317</span></div>
<div class="m" style="left:525.00px;top:64.07px;"><span style="color:#c8c8ff">84</span><span style="color:#8383d0">C0</span></div>
<div class="m" style="left:826.50px;top:64.07px;"><span style="color:#36b0e3">test</span></div>
<div class="m" style="left:948.00px;top:64.07px;"><span style="color:#c775bf">al</span><span style="color:#e6e6e6">,</span> <span style="color:#c775bf">al</span></div>
<div style="left:12.00px;top:106.00px;width:1452.00px;height:1.00px;background:rgba(255,255,255,0.035);"></div>
<div class="m" style="left:110.30px;top:87.07px;"><span style="color:#8a8a8a">+46</span></div>
<div style="left:188.30px;top:83.80px;width:17.40px;height:17.50px;background:#64aa82;border:1px solid rgba(85,80,100,0.9);border-radius:3.5px;box-sizing:border-box"></div>
<div class="m" style="left:206.00px;top:87.07px;"><span style="color:#8c8c8c">…t\TracyProfiler.cpp:3317</span></div>
<div class="m" style="left:525.00px;top:87.07px;"><span style="color:#c8c8ff">0F</span><span style="color:#8383d0">84</span><span style="color:#c8c8ff">35</span><span style="color:#8383d0">02</span><span style="color:#c8c8ff">00</span><span style="color:#8383d0">00</span></div>
<div class="m" style="left:826.50px;top:87.07px;"><span style="color:#eba040">je</span></div>
<div class="m" style="left:948.00px;top:87.07px;"><span style="color:#a3d1ff">.L12</span><span style="color:#808080">  -&gt; [tracy::Profiler::HandleServerQuery]</span></div>
<div style="left:11.00px;top:107.00px;width:1453.00px;height:22.00px;background:#243432;"></div>
<div style="left:12.00px;top:129.00px;width:1452.00px;height:1.00px;background:rgba(255,255,255,0.035);"></div>
<div class="m" style="left:110.30px;top:110.07px;"><span style="color:#8a8a8a">+52</span></div>
<div style="left:188.30px;top:106.80px;width:17.40px;height:17.50px;background:#64aa82;border:1px solid rgba(85,80,100,0.9);border-radius:3.5px;box-sizing:border-box"></div>
<div class="m" style="left:206.00px;top:110.07px;"><span style="color:#8c8c8c">…t\TracyProfiler.cpp:3326</span></div>
<div class="m" style="left:525.00px;top:110.07px;"><span style="color:#c8c8ff">0F</span><span style="color:#8383d0">B6</span><span style="color:#c8c8ff">45</span><span style="color:#8383d0">97</span></div>
<div class="m" style="left:826.50px;top:110.07px;"><span style="color:#36b0e3">movzx</span></div>
<div class="m" style="left:948.00px;top:110.07px;"><span style="color:#c775bf">eax</span><span style="color:#e6e6e6">,</span> <span style="color:#73ad52">byte</span> <span style="color:#73ad52">ptr</span> <span style="color:#e6e6e6">[</span><span style="color:#c775bf">rbp</span> <span style="color:#e6e6e6">-</span> <span style="color:#cf99e8">0x69</span><span style="color:#e6e6e6">]</span></div>
<div style="left:11.00px;top:130.00px;width:1453.00px;height:22.00px;background:#243432;"></div>
<div style="left:12.00px;top:152.00px;width:1452.00px;height:1.00px;background:rgba(255,255,255,0.035);"></div>
<div class="m" style="left:110.30px;top:133.07px;"><span style="color:#8a8a8a">+56</span></div>
<div style="left:188.30px;top:129.80px;width:17.40px;height:17.50px;background:#64aa82;border:1px solid rgba(85,80,100,0.9);border-radius:3.5px;box-sizing:border-box"></div>
<div class="m" style="left:206.00px;top:133.07px;"><span style="color:#8c8c8c">…t\TracyProfiler.cpp:3326</span></div>
<div class="m" style="left:525.00px;top:133.07px;"><span style="color:#c8c8ff">48</span><span style="color:#8383d0">8B</span><span style="color:#c8c8ff">7D</span><span style="color:#8383d0">98</span></div>
<div class="m" style="left:826.50px;top:133.07px;"><span style="color:#36b0e3">mov</span></div>
<div class="m" style="left:948.00px;top:133.07px;"><span style="color:#c775bf">rdi</span><span style="color:#e6e6e6">,</span> <span style="color:#73ad52">qword</span> <span style="color:#73ad52">ptr</span> <span style="color:#e6e6e6">[</span><span style="color:#c775bf">rbp</span> <span style="color:#e6e6e6">-</span> <span style="color:#cf99e8">0x68</span><span style="color:#e6e6e6">]</span></div>
<div style="left:11.00px;top:153.00px;width:1453.00px;height:22.00px;background:#243432;"></div>
<div style="left:12.00px;top:175.00px;width:1452.00px;height:1.00px;background:rgba(255,255,255,0.035);"></div>
<div style="left:11.30px;top:153.00px;width:13.48px;height:22.00px;background:#4a4a4a;"></div>
<div style="left:11.30px;top:154.50px;width:1.50px;height:20.50px;background:#ff1a1a;"></div>
<div style="left:11.30px;top:153.00px;width:1.50px;height:1.50px;background:#555;"></div>
<div class="pc" style="left:27.92px;top:156.07px;">15.50%</div>
<div class="m" style="left:110.30px;top:156.07px;"><span style="color:#8a8a8a">+60</span></div>
<div style="left:188.30px;top:152.80px;width:17.40px;height:17.50px;background:#64aa82;border:1px solid rgba(85,80,100,0.9);border-radius:3.5px;box-sizing:border-box"></div>
<div class="m" style="left:206.00px;top:156.07px;"><span style="color:#8c8c8c">…t\TracyProfiler.cpp:3326</span></div>
<div class="m" style="left:525.00px;top:156.07px;"><span style="color:#c8c8ff">8B</span><span style="color:#8383d0">55</span><span style="color:#c8c8ff">A0</span></div>
<div class="m" style="left:826.50px;top:156.07px;"><span style="color:#36b0e3">mov</span></div>
<div class="m" style="left:948.00px;top:156.07px;"><span style="color:#c775bf">edx</span><span style="color:#e6e6e6">,</span> <span style="color:#73ad52">dword</span> <span style="color:#73ad52">ptr</span> <span style="color:#e6e6e6">[</span><span style="color:#c775bf">rbp</span> <span style="color:#e6e6e6">-</span> <span style="color:#cf99e8">0x60</span><span style="color:#e6e6e6">]</span></div>
<div style="left:11.00px;top:176.00px;width:1453.00px;height:22.00px;background:#243432;"></div>
<div style="left:12.00px;top:198.00px;width:1452.00px;height:1.00px;background:rgba(255,255,255,0.035);"></div>
<div class="m" style="left:110.30px;top:179.07px;"><span style="color:#8a8a8a">+63</span></div>
<div style="left:188.30px;top:175.80px;width:17.40px;height:17.50px;background:#64aa82;border:1px solid rgba(85,80,100,0.9);border-radius:3.5px;box-sizing:border-box"></div>
<div class="m" style="left:206.00px;top:179.07px;"><span style="color:#8c8c8c">…t\TracyProfiler.cpp:3326</span></div>
<div class="m" style="left:525.00px;top:179.07px;"><span style="color:#c8c8ff">83</span><span style="color:#8383d0">F8</span><span style="color:#c8c8ff">0F</span></div>
<div class="m" style="left:826.50px;top:179.07px;"><span style="color:#36b0e3">cmp</span></div>
<div class="m" style="left:948.00px;top:179.07px;"><span style="color:#c775bf">eax</span><span style="color:#e6e6e6">,</span> <span style="color:#cf99e8">0xf</span></div>
<div style="left:11.00px;top:199.00px;width:1453.00px;height:22.00px;background:#243432;"></div>
<div style="left:12.00px;top:221.00px;width:1452.00px;height:1.00px;background:rgba(255,255,255,0.035);"></div>
<div class="m" style="left:110.30px;top:202.07px;"><span style="color:#8a8a8a">+66</span></div>
<div style="left:188.30px;top:198.80px;width:17.40px;height:17.50px;background:#64aa82;border:1px solid rgba(85,80,100,0.9);border-radius:3.5px;box-sizing:border-box"></div>
<div class="m" style="left:206.00px;top:202.07px;"><span style="color:#8c8c8c">…t\TracyProfiler.cpp:3326</span></div>
<div class="m" style="left:525.00px;top:202.07px;"><span style="color:#c8c8ff">0F</span><span style="color:#8383d0">87</span><span style="color:#c8c8ff">CE</span><span style="color:#8383d0">06</span><span style="color:#c8c8ff">00</span><span style="color:#8383d0">00</span></div>
<div class="m" style="left:826.50px;top:202.07px;"><span style="color:#eba040">ja</span></div>
<div class="m" style="left:948.00px;top:202.07px;"><span style="color:#a3d1ff">.L33</span><span style="color:#808080">  -&gt; [tracy::Profiler::HandleServerQuery]</span></div>
<div style="left:11.00px;top:222.00px;width:1453.00px;height:22.00px;background:#243432;"></div>
<div style="left:12.00px;top:244.00px;width:1452.00px;height:1.00px;background:rgba(255,255,255,0.035);"></div>
<div class="m" style="left:110.30px;top:225.07px;"><span style="color:#8a8a8a">+72</span></div>
<div style="left:188.30px;top:221.80px;width:17.40px;height:17.50px;background:#64aa82;border:1px solid rgba(85,80,100,0.9);border-radius:3.5px;box-sizing:border-box"></div>
<div class="m" style="left:206.00px;top:225.07px;"><span style="color:#8c8c8c">…t\TracyProfiler.cpp:3326</span></div>
<div class="m" style="left:525.00px;top:225.07px;"><span style="color:#c8c8ff">4C</span><span style="color:#8383d0">8D</span><span style="color:#c8c8ff">05</span><span style="color:#8383d0">F1</span><span style="color:#c8c8ff">46</span><span style="color:#8383d0">F2</span><span style="color:#c8c8ff">FF</span></div>
<div class="m" style="left:826.50px;top:225.07px;"><span style="color:#36b0e3">lea</span></div>
<div class="m" style="left:948.00px;top:225.07px;"><span style="color:#c775bf">r8</span><span style="color:#e6e6e6">,</span> <span style="color:#e6e6e6">[</span><span style="color:#c775bf">rip</span> <span style="color:#e6e6e6">-</span> <span style="color:#cf99e8">0xdb90f</span><span style="color:#e6e6e6">]</span></div>
<div style="left:11.00px;top:245.00px;width:1453.00px;height:22.00px;background:#243432;"></div>
<div style="left:12.00px;top:267.00px;width:1452.00px;height:1.00px;background:rgba(255,255,255,0.035);"></div>
<div class="m" style="left:110.30px;top:248.07px;"><span style="color:#8a8a8a">+79</span></div>
<div style="left:188.30px;top:244.80px;width:17.40px;height:17.50px;background:#64aa82;border:1px solid rgba(85,80,100,0.9);border-radius:3.5px;box-sizing:border-box"></div>
<div class="m" style="left:206.00px;top:248.07px;"><span style="color:#8c8c8c">…t\TracyProfiler.cpp:3326</span></div>
<div class="m" style="left:525.00px;top:248.07px;"><span style="color:#c8c8ff">41</span><span style="color:#8383d0">8B</span><span style="color:#c8c8ff">8C</span><span style="color:#8383d0">80</span><span style="color:#c8c8ff">E0</span><span style="color:#8383d0">BF</span><span style="color:#c8c8ff">0D</span><span style="color:#8383d0">00</span></div>
<div class="m" style="left:826.50px;top:248.07px;"><span style="color:#36b0e3">mov</span></div>
<div class="m" style="left:948.00px;top:248.07px;"><span style="color:#c775bf">ecx</span><span style="color:#e6e6e6">,</span> <span style="color:#73ad52">dword</span> <span style="color:#73ad52">ptr</span> <span style="color:#e6e6e6">[</span><span style="color:#c775bf">r8</span> <span style="color:#e6e6e6">+</span> <span style="color:#c775bf">rax</span><span style="color:#e6e6e6">*</span><span style="color:#cf99e8">4</span> <span style="color:#e6e6e6">+</span> <span style="color:#cf99e8">0xdbfe0</span><span style="color:#e6e6e6">]</span></div>
<div style="left:11.00px;top:268.00px;width:1453.00px;height:22.00px;background:#243432;"></div>
<div style="left:12.00px;top:290.00px;width:1452.00px;height:1.00px;background:rgba(255,255,255,0.035);"></div>
<div style="left:11.30px;top:269.50px;width:1.50px;height:20.50px;background:#983232;"></div>
<div style="left:11.30px;top:268.00px;width:1.50px;height:1.50px;background:#555;"></div>
<div class="pc" style="left:38.90px;top:271.07px;">0.22%</div>
<div class="m" style="left:110.30px;top:271.07px;"><span style="color:#8a8a8a">+87</span></div>
<div style="left:188.30px;top:267.80px;width:17.40px;height:17.50px;background:#64aa82;border:1px solid rgba(85,80,100,0.9);border-radius:3.5px;box-sizing:border-box"></div>
<div class="m" style="left:206.00px;top:271.07px;"><span style="color:#8c8c8c">…t\TracyProfiler.cpp:3326</span></div>
<div class="m" style="left:525.00px;top:271.07px;"><span style="color:#c8c8ff">49</span><span style="color:#8383d0">03</span><span style="color:#c8c8ff">C8</span></div>
<div class="m" style="left:826.50px;top:271.07px;"><span style="color:#36b0e3">add</span></div>
<div class="m" style="left:948.00px;top:271.07px;"><span style="color:#c775bf">rcx</span><span style="color:#e6e6e6">,</span> <span style="color:#c775bf">r8</span></div>
<div style="left:11.00px;top:291.00px;width:1453.00px;height:22.00px;background:#243432;"></div>
<div style="left:12.00px;top:313.00px;width:1452.00px;height:1.00px;background:rgba(255,255,255,0.035);"></div>
<div class="m" style="left:110.30px;top:294.07px;"><span style="color:#8a8a8a">+90</span></div>
<div style="left:188.30px;top:290.80px;width:17.40px;height:17.50px;background:#64aa82;border:1px solid rgba(85,80,100,0.9);border-radius:3.5px;box-sizing:border-box"></div>
<div class="m" style="left:206.00px;top:294.07px;"><span style="color:#8c8c8c">…t\TracyProfiler.cpp:3326</span></div>
<div class="m" style="left:525.00px;top:294.07px;"><span style="color:#c8c8ff">FF</span><span style="color:#8383d0">E1</span></div>
<div class="m" style="left:826.50px;top:294.07px;"><span style="color:#eba040">jmp</span></div>
<div class="m" style="left:948.00px;top:294.07px;"><span style="color:#c775bf">rcx</span></div>
<div style="left:12.00px;top:336.00px;width:1452.00px;height:1.00px;background:rgba(255,255,255,0.035);"></div>
<div class="m" style="left:110.30px;top:317.07px;"><span style="color:#8a8a8a">+92</span></div>
<div style="left:188.30px;top:313.80px;width:17.40px;height:17.50px;background:#ae9a5e;border:1px solid rgba(85,80,100,0.9);border-radius:3.5px;box-sizing:border-box"></div>
<div class="m" style="left:206.00px;top:317.07px;"><span style="color:#8c8c8c">…t\TracyProfiler.hpp:676</span></div>
<div class="m" style="left:525.00px;top:317.07px;"><span style="color:#c8c8ff">49</span><span style="color:#8383d0">C7</span><span style="color:#c8c8ff">C1</span><span style="color:#8383d0">FF</span><span style="color:#c8c8ff">FF</span><span style="color:#8383d0">FF</span><span style="color:#c8c8ff">FF</span></div>
<div class="m" style="left:826.50px;top:317.07px;opacity:0.55;"><span style="color:#36b0e3">mov</span></div>
<div class="m" style="left:948.00px;top:317.07px;"><span style="color:rgba(199,117,191,0.55)">r9</span><span style="color:rgba(230,230,230,0.55)">,</span> <span style="color:rgba(207,153,232,0.55)">0xffffffffffffffff</span></div>
<div style="left:12.00px;top:359.00px;width:1452.00px;height:1.00px;background:rgba(255,255,255,0.035);"></div>
<div class="m" style="left:110.30px;top:340.07px;"><span style="color:#8a8a8a">+99</span></div>
<div style="left:188.30px;top:336.80px;width:17.40px;height:17.50px;background:#ae9a5e;border:1px solid rgba(85,80,100,0.9);border-radius:3.5px;box-sizing:border-box"></div>
<div class="m" style="left:206.00px;top:340.07px;"><span style="color:#8c8c8c">…t\TracyProfiler.hpp:676</span></div>
<div class="m" style="left:525.00px;top:340.07px;"><span style="color:#c8c8ff">49</span><span style="color:#8383d0">FF</span><span style="color:#c8c8ff">C1</span></div>
<div class="m" style="left:826.50px;top:340.07px;opacity:0.55;"><span style="color:#36b0e3">inc</span></div>
<div class="m" style="left:948.00px;top:340.07px;"><span style="color:rgba(199,117,191,0.55)">r9</span><span style="color:#c4c4c4">  ; .L0</span></div>
<div style="left:12.00px;top:382.00px;width:1452.00px;height:1.00px;background:rgba(255,255,255,0.035);"></div>
<div class="m" style="left:110.30px;top:363.07px;"><span style="color:#8a8a8a">+102</span></div>
<div style="left:188.30px;top:359.80px;width:17.40px;height:17.50px;background:#ae9a5e;border:1px solid rgba(85,80,100,0.9);border-radius:3.5px;box-sizing:border-box"></div>
<div class="m" style="left:206.00px;top:363.07px;"><span style="color:#8c8c8c">…t\TracyProfiler.hpp:676</span></div>
<div class="m" style="left:525.00px;top:363.07px;"><span style="color:#c8c8ff">42</span><span style="color:#8383d0">80</span><span style="color:#c8c8ff">3C</span><span style="color:#8383d0">0F</span><span style="color:#c8c8ff">00</span></div>
<div class="m" style="left:826.50px;top:363.07px;opacity:0.55;"><span style="color:#36b0e3">cmp</span></div>
<div class="m" style="left:948.00px;top:363.07px;"><span style="color:rgba(115,173,82,0.55)">byte</span> <span style="color:rgba(115,173,82,0.55)">ptr</span> <span style="color:rgba(230,230,230,0.55)">[</span><span style="color:rgba(199,117,191,0.55)">rdi</span> <span style="color:rgba(230,230,230,0.55)">+</span> <span style="color:rgba(199,117,191,0.55)">r9</span><span style="color:rgba(230,230,230,0.55)">]</span><span style="color:rgba(230,230,230,0.55)">,</span> <span style="color:rgba(207,153,232,0.55)">0</span></div>
<div style="left:12.00px;top:405.00px;width:1452.00px;height:1.00px;background:rgba(255,255,255,0.035);"></div>
<div class="m" style="left:110.30px;top:386.07px;"><span style="color:#8a8a8a">+107</span></div>
<div style="left:188.30px;top:382.80px;width:17.40px;height:17.50px;background:#ae9a5e;border:1px solid rgba(85,80,100,0.9);border-radius:3.5px;box-sizing:border-box"></div>
<div class="m" style="left:206.00px;top:386.07px;"><span style="color:#8c8c8c">…t\TracyProfiler.hpp:676</span></div>
<div class="m" style="left:525.00px;top:386.07px;"><span style="color:#c8c8ff">75</span><span style="color:#8383d0">F6</span></div>
<div class="m" style="left:826.50px;top:386.07px;opacity:0.55;"><span style="color:#eba040">jne</span></div>
<div class="m" style="left:948.00px;top:386.07px;"><span style="color:rgba(163,209,255,0.55)">.L0</span><span style="color:#808080">  -&gt; [tracy::Profiler::HandleServerQuery]</span></div>
<div style="left:12.00px;top:428.00px;width:1452.00px;height:1.00px;background:rgba(255,255,255,0.035);"></div>
<div class="m" style="left:110.30px;top:409.07px;"><span style="color:#8a8a8a">+109</span></div>
<div style="left:188.30px;top:405.80px;width:17.40px;height:17.50px;background:#ae9a5e;border:1px solid rgba(85,80,100,0.9);border-radius:3.5px;box-sizing:border-box"></div>
<div class="m" style="left:206.00px;top:409.07px;"><span style="color:#8c8c8c">…t\TracyProfiler.hpp:676</span></div>
<div class="m" style="left:525.00px;top:409.07px;"><span style="color:#c8c8ff">4C</span><span style="color:#8383d0">8B</span><span style="color:#c8c8ff">C7</span></div>
<div class="m" style="left:826.50px;top:409.07px;opacity:0.55;"><span style="color:#36b0e3">mov</span></div>
<div class="m" style="left:948.00px;top:409.07px;"><span style="color:rgba(199,117,191,0.55)">r8</span><span style="color:rgba(230,230,230,0.55)">,</span> <span style="color:rgba(199,117,191,0.55)">rdi</span></div>
<div style="left:12.00px;top:451.00px;width:1452.00px;height:1.00px;background:rgba(255,255,255,0.035);"></div>
<div class="m" style="left:110.30px;top:432.07px;"><span style="color:#8a8a8a">+112</span></div>
<div style="left:188.30px;top:428.80px;width:17.40px;height:17.50px;background:#ae9a5e;border:1px solid rgba(85,80,100,0.9);border-radius:3.5px;box-sizing:border-box"></div>
<div class="m" style="left:206.00px;top:432.07px;"><span style="color:#8c8c8c">…t\TracyProfiler.hpp:676</span></div>
<div class="m" style="left:525.00px;top:432.07px;"><span style="color:#c8c8ff">C6</span><span style="color:#8383d0">44</span><span style="color:#c8c8ff">24</span><span style="color:#8383d0">20</span><span style="color:#c8c8ff">5E</span></div>
<div class="m" style="left:826.50px;top:432.07px;opacity:0.55;"><span style="color:#36b0e3">mov</span></div>
<div class="m" style="left:948.00px;top:432.07px;"><span style="color:rgba(115,173,82,0.55)">byte</span> <span style="color:rgba(115,173,82,0.55)">ptr</span> <span style="color:rgba(230,230,230,0.55)">[</span><span style="color:rgba(199,117,191,0.55)">rsp</span> <span style="color:rgba(230,230,230,0.55)">+</span> <span style="color:rgba(207,153,232,0.55)">0x20</span><span style="color:rgba(230,230,230,0.55)">]</span><span style="color:rgba(230,230,230,0.55)">,</span> <span style="color:rgba(207,153,232,0.55)">0x5e</span></div>
<div style="left:12.00px;top:474.00px;width:1452.00px;height:1.00px;background:rgba(255,255,255,0.035);"></div>
<div class="m" style="left:110.30px;top:455.07px;"><span style="color:#8a8a8a">+117</span></div>
<div style="left:188.30px;top:451.80px;width:17.40px;height:17.50px;background:#ae9a5e;border:1px solid rgba(85,80,100,0.9);border-radius:3.5px;box-sizing:border-box"></div>
<div class="m" style="left:206.00px;top:455.07px;"><span style="color:#8c8c8c">…t\TracyProfiler.hpp:676</span></div>
<div class="m" style="left:525.00px;top:455.07px;"><span style="color:#c8c8ff">48</span><span style="color:#8383d0">8B</span><span style="color:#c8c8ff">D7</span></div>
<div class="m" style="left:826.50px;top:455.07px;opacity:0.55;"><span style="color:#36b0e3">mov</span></div>
<div class="m" style="left:948.00px;top:455.07px;"><span style="color:rgba(199,117,191,0.55)">rdx</span><span style="color:rgba(230,230,230,0.55)">,</span> <span style="color:rgba(199,117,191,0.55)">rdi</span></div>
<div style="left:12.00px;top:497.00px;width:1452.00px;height:1.00px;background:rgba(255,255,255,0.035);"></div>
<div class="m" style="left:110.30px;top:478.07px;"><span style="color:#8a8a8a">+120</span></div>
<div style="left:188.30px;top:474.80px;width:17.40px;height:17.50px;background:#ae9a5e;border:1px solid rgba(85,80,100,0.9);border-radius:3.5px;box-sizing:border-box"></div>
<div class="m" style="left:206.00px;top:478.07px;"><span style="color:#8c8c8c">…t\TracyProfiler.hpp:676</span></div>
<div class="m" style="left:525.00px;top:478.07px;"><span style="color:#c8c8ff">48</span><span style="color:#8383d0">8B</span><span style="color:#c8c8ff">CB</span></div>
<div class="m" style="left:826.50px;top:478.07px;opacity:0.55;"><span style="color:#36b0e3">mov</span></div>
<div class="m" style="left:948.00px;top:478.07px;"><span style="color:rgba(199,117,191,0.55)">rcx</span><span style="color:rgba(230,230,230,0.55)">,</span> <span style="color:rgba(199,117,191,0.55)">rbx</span></div>
<div style="left:12.00px;top:520.00px;width:1452.00px;height:1.00px;background:rgba(255,255,255,0.035);"></div>
<div class="m" style="left:110.30px;top:501.07px;"><span style="color:#8a8a8a">+123</span></div>
<div style="left:188.30px;top:497.80px;width:17.40px;height:17.50px;background:#ae9a5e;border:1px solid rgba(85,80,100,0.9);border-radius:3.5px;box-sizing:border-box"></div>
<div class="m" style="left:206.00px;top:501.07px;"><span style="color:#8c8c8c">…t\TracyProfiler.hpp:676</span></div>
<div class="m" style="left:525.00px;top:501.07px;"><span style="color:#c8c8ff">E8</span><span style="color:#8383d0">50</span><span style="color:#c8c8ff">16</span><span style="color:#8383d0">00</span><span style="color:#c8c8ff">00</span></div>
<div class="m" style="left:826.50px;top:501.07px;opacity:0.55;"><span style="color:#c3e22e">call</span></div>
<div class="m" style="left:948.00px;top:501.07px;"><span style="color:rgba(163,209,255,0.55)">tracy::Profiler::SendString</span><span style="color:#808080">  [0x7ff61a53cf90]</span></div>
<div style="left:12.00px;top:543.00px;width:1452.00px;height:1.00px;background:rgba(255,255,255,0.035);"></div>
<div class="m" style="left:110.30px;top:524.07px;"><span style="color:#8a8a8a">+128</span></div>
<div style="left:188.30px;top:520.80px;width:17.40px;height:17.50px;background:#64aa82;border:1px solid rgba(85,80,100,0.9);border-radius:3.5px;box-sizing:border-box"></div>
<div class="m" style="left:206.00px;top:524.07px;"><span style="color:#8c8c8c">…t\TracyProfiler.cpp:3401</span></div>
<div class="m" style="left:525.00px;top:524.07px;"><span style="color:#c8c8ff">B0</span><span style="color:#8383d0">01</span></div>
<div class="m" style="left:826.50px;top:524.07px;"><span style="color:#36b0e3">mov</span></div>
<div class="m" style="left:948.00px;top:524.07px;"><span style="color:#c775bf">al</span><span style="color:#e6e6e6">,</span> <span style="color:#cf99e8">1</span></div>
<div style="left:12.00px;top:566.00px;width:1452.00px;height:1.00px;background:rgba(255,255,255,0.035);"></div>
<div class="m" style="left:110.30px;top:547.07px;"><span style="color:#8a8a8a">+130</span></div>
<div style="left:188.30px;top:543.80px;width:17.40px;height:17.50px;background:#64aa82;border:1px solid rgba(85,80,100,0.9);border-radius:3.5px;box-sizing:border-box"></div>
<div class="m" style="left:206.00px;top:547.07px;"><span style="color:#8c8c8c">…t\TracyProfiler.cpp:3401</span></div>
<div class="m" style="left:525.00px;top:547.07px;"><span style="color:#c8c8ff">E9</span><span style="color:#8383d0">E4</span><span style="color:#c8c8ff">01</span><span style="color:#8383d0">00</span><span style="color:#c8c8ff">00</span></div>
<div class="m" style="left:826.50px;top:547.07px;"><span style="color:#eba040">jmp</span></div>
<div class="m" style="left:948.00px;top:547.07px;"><span style="color:#a3d1ff">.L13</span><span style="color:#808080">  -&gt; [tracy::Profiler::HandleServerQuery]</span></div>
<div style="left:12.00px;top:589.00px;width:1452.00px;height:1.00px;background:rgba(255,255,255,0.035);"></div>
<div class="m" style="left:110.30px;top:570.07px;"><span style="color:#8a8a8a">+135</span></div>
<div style="left:188.30px;top:566.80px;width:17.40px;height:17.50px;background:#64aa82;border:1px solid rgba(85,80,100,0.9);border-radius:3.5px;box-sizing:border-box"></div>
<div class="m" style="left:206.00px;top:570.07px;"><span style="color:#8c8c8c">…t\TracyProfiler.cpp:3332</span></div>
<div class="m" style="left:525.00px;top:570.07px;"><span style="color:#c8c8ff">8B</span><span style="color:#8383d0">43</span><span style="color:#c8c8ff">20</span></div>
<div class="m" style="left:826.50px;top:570.07px;"><span style="color:#36b0e3">mov</span></div>
<div class="m" style="left:948.00px;top:570.07px;"><span style="color:#c775bf">eax</span><span style="color:#e6e6e6">,</span> <span style="color:#73ad52">dword</span> <span style="color:#73ad52">ptr</span> <span style="color:#e6e6e6">[</span><span style="color:#c775bf">rbx</span> <span style="color:#e6e6e6">+</span> <span style="color:#cf99e8">0x20</span><span style="color:#e6e6e6">]</span></div>
<div style="left:12.00px;top:612.00px;width:1452.00px;height:1.00px;background:rgba(255,255,255,0.035);"></div>
<div class="m" style="left:110.30px;top:593.07px;"><span style="color:#8a8a8a">+138</span></div>
<div style="left:188.30px;top:589.80px;width:17.40px;height:17.50px;background:#64aa82;border:1px solid rgba(85,80,100,0.9);border-radius:3.5px;box-sizing:border-box"></div>
<div class="m" style="left:206.00px;top:593.07px;"><span style="color:#8c8c8c">…t\TracyProfiler.cpp:3332</span></div>
<div class="m" style="left:525.00px;top:593.07px;"><span style="color:#c8c8ff">48</span><span style="color:#8383d0">3B</span><span style="color:#c8c8ff">F8</span></div>
<div class="m" style="left:826.50px;top:593.07px;"><span style="color:#36b0e3">cmp</span></div>
<div class="m" style="left:948.00px;top:593.07px;"><span style="color:#c775bf">rdi</span><span style="color:#e6e6e6">,</span> <span style="color:#c775bf">rax</span></div>
<div style="left:12.00px;top:635.00px;width:1452.00px;height:1.00px;background:rgba(255,255,255,0.035);"></div>
<div class="m" style="left:110.30px;top:616.07px;"><span style="color:#8a8a8a">+141</span></div>
<div style="left:188.30px;top:612.80px;width:17.40px;height:17.50px;background:#64aa82;border:1px solid rgba(85,80,100,0.9);border-radius:3.5px;box-sizing:border-box"></div>
<div class="m" style="left:206.00px;top:616.07px;"><span style="color:#8c8c8c">…t\TracyProfiler.cpp:3332</span></div>
<div class="m" style="left:525.00px;top:616.07px;"><span style="color:#c8c8ff">75</span><span style="color:#8383d0">24</span></div>
<div class="m" style="left:826.50px;top:616.07px;"><span style="color:#eba040">jne</span></div>
<div class="m" style="left:948.00px;top:616.07px;"><span style="color:#a3d1ff">.L1</span><span style="color:#808080">  -&gt; [tracy::GetThreadName]</span></div>
<div style="left:12.00px;top:658.00px;width:1452.00px;height:1.00px;background:rgba(255,255,255,0.035);"></div>
<div class="m" style="left:110.30px;top:639.07px;"><span style="color:#8a8a8a">+143</span></div>
<div style="left:188.30px;top:635.80px;width:17.40px;height:17.50px;background:#64aa82;border:1px solid rgba(85,80,100,0.9);border-radius:3.5px;box-sizing:border-box"></div>
<div class="m" style="left:206.00px;top:639.07px;"><span style="color:#8c8c8c">…t\TracyProfiler.cpp:3334</span></div>
<div class="m" style="left:525.00px;top:639.07px;"><span style="color:#c8c8ff">41</span><span style="color:#8383d0">B9</span><span style="color:#c8c8ff">0B</span><span style="color:#8383d0">00</span><span style="color:#c8c8ff">00</span><span style="color:#8383d0">00</span></div>
<div class="m" style="left:826.50px;top:639.07px;"><span style="color:#36b0e3">mov</span></div>
<div class="m" style="left:948.00px;top:639.07px;"><span style="color:#c775bf">r9d</span><span style="color:#e6e6e6">,</span> <span style="color:#cf99e8">0xb</span></div>
<div style="left:12.00px;top:681.00px;width:1452.00px;height:1.00px;background:rgba(255,255,255,0.035);"></div>
<div class="m" style="left:110.30px;top:662.07px;"><span style="color:#8a8a8a">+149</span></div>
<div style="left:188.30px;top:658.80px;width:17.40px;height:17.50px;background:#64aa82;border:1px solid rgba(85,80,100,0.9);border-radius:3.5px;box-sizing:border-box"></div>
<div class="m" style="left:206.00px;top:662.07px;"><span style="color:#8c8c8c">…t\TracyProfiler.cpp:3334</span></div>
<div class="m" style="left:525.00px;top:662.07px;"><span style="color:#c8c8ff">C6</span><span style="color:#8383d0">44</span><span style="color:#c8c8ff">24</span><span style="color:#8383d0">20</span><span style="color:#c8c8ff">5F</span></div>
<div class="m" style="left:826.50px;top:662.07px;"><span style="color:#36b0e3">mov</span></div>
<div class="m" style="left:948.00px;top:662.07px;"><span style="color:#73ad52">byte</span> <span style="color:#73ad52">ptr</span> <span style="color:#e6e6e6">[</span><span style="color:#c775bf">rsp</span> <span style="color:#e6e6e6">+</span> <span style="color:#cf99e8">0x20</span><span style="color:#e6e6e6">]</span><span style="color:#e6e6e6">,</span> <span style="color:#cf99e8">0x5f</span></div>
<div style="left:12.00px;top:704.00px;width:1452.00px;height:1.00px;background:rgba(255,255,255,0.035);"></div>
<div class="m" style="left:110.30px;top:685.07px;"><span style="color:#8a8a8a">+154</span></div>
<div style="left:188.30px;top:681.80px;width:17.40px;height:17.50px;background:#64aa82;border:1px solid rgba(85,80,100,0.9);border-radius:3.5px;box-sizing:border-box"></div>
<div class="m" style="left:206.00px;top:685.07px;"><span style="color:#8c8c8c">…t\TracyProfiler.cpp:3334</span></div>
<div class="m" style="left:525.00px;top:685.07px;"><span style="color:#c8c8ff">4C</span><span style="color:#8383d0">8D</span><span style="color:#c8c8ff">05</span><span style="color:#8383d0">5F</span><span style="color:#c8c8ff">BA</span><span style="color:#8383d0">0C</span><span style="color:#c8c8ff">00</span></div>
<div class="m" style="left:826.50px;top:685.07px;"><span style="color:#36b0e3">lea</span></div>
<div class="m" style="left:948.00px;top:685.07px;"><span style="color:#c775bf">r8</span><span style="color:#e6e6e6">,</span> <span style="color:#e6e6e6">[</span><span style="color:#c775bf">rip</span> <span style="color:#e6e6e6">+</span> <span style="color:#cf99e8">0xcba5f</span><span style="color:#e6e6e6">]</span></div>
<div style="left:12.00px;top:727.00px;width:1452.00px;height:1.00px;background:rgba(255,255,255,0.035);"></div>
<div class="m" style="left:110.30px;top:708.07px;"><span style="color:#8a8a8a">+161</span></div>
<div style="left:188.30px;top:704.80px;width:17.40px;height:17.50px;background:#64aa82;border:1px solid rgba(85,80,100,0.9);border-radius:3.5px;box-sizing:border-box"></div>
<div class="m" style="left:206.00px;top:708.07px;"><span style="color:#8c8c8c">…t\TracyProfiler.cpp:3334</span></div>
<div class="m" style="left:525.00px;top:708.07px;"><span style="color:#c8c8ff">48</span><span style="color:#8383d0">8B</span><span style="color:#c8c8ff">D7</span></div>
<div class="m" style="left:826.50px;top:708.07px;"><span style="color:#36b0e3">mov</span></div>
<div class="m" style="left:948.00px;top:708.07px;"><span style="color:#c775bf">rdx</span><span style="color:#e6e6e6">,</span> <span style="color:#c775bf">rdi</span></div>
<div style="left:12.00px;top:750.00px;width:1452.00px;height:1.00px;background:rgba(255,255,255,0.035);"></div>
<div class="m" style="left:110.30px;top:731.07px;"><span style="color:#8a8a8a">+164</span></div>
<div style="left:188.30px;top:727.80px;width:17.40px;height:17.50px;background:#64aa82;border:1px solid rgba(85,80,100,0.9);border-radius:3.5px;box-sizing:border-box"></div>
<div class="m" style="left:206.00px;top:731.07px;"><span style="color:#8c8c8c">…t\TracyProfiler.cpp:3334</span></div>
<div class="m" style="left:525.00px;top:731.07px;"><span style="color:#c8c8ff">48</span><span style="color:#8383d0">8B</span><span style="color:#c8c8ff">CB</span></div>
<div class="m" style="left:826.50px;top:731.07px;"><span style="color:#36b0e3">mov</span></div>
<div class="m" style="left:948.00px;top:731.07px;"><span style="color:#c775bf">rcx</span><span style="color:#e6e6e6">,</span> <span style="color:#c775bf">rbx</span></div>
<div style="left:12.00px;top:773.00px;width:1452.00px;height:1.00px;background:rgba(255,255,255,0.035);"></div>
<div class="m" style="left:110.30px;top:754.07px;"><span style="color:#8a8a8a">+167</span></div>
<div style="left:188.30px;top:750.80px;width:17.40px;height:17.50px;background:#64aa82;border:1px solid rgba(85,80,100,0.9);border-radius:3.5px;box-sizing:border-box"></div>
<div class="m" style="left:206.00px;top:754.07px;"><span style="color:#8c8c8c">…t\TracyProfiler.cpp:3334</span></div>
<div class="m" style="left:525.00px;top:754.07px;"><span style="color:#c8c8ff">E8</span><span style="color:#8383d0">24</span><span style="color:#c8c8ff">16</span><span style="color:#8383d0">00</span><span style="color:#c8c8ff">00</span></div>
<div class="m" style="left:826.50px;top:754.07px;"><span style="color:#c3e22e">call</span></div>
<div class="m" style="left:948.00px;top:754.07px;"><span style="color:#a3d1ff">tracy::Profiler::SendString</span><span style="color:#808080">  [0x7ff61a53cf90]</span></div>
<div style="left:12.00px;top:796.00px;width:1452.00px;height:1.00px;background:rgba(255,255,255,0.035);"></div>
<div class="m" style="left:110.30px;top:777.07px;"><span style="color:#8a8a8a">+172</span></div>
<div style="left:188.30px;top:773.80px;width:17.40px;height:17.50px;background:#64aa82;border:1px solid rgba(85,80,100,0.9);border-radius:3.5px;box-sizing:border-box"></div>
<div class="m" style="left:206.00px;top:777.07px;"><span style="color:#8c8c8c">…t\TracyProfiler.cpp:3401</span></div>
<div class="m" style="left:525.00px;top:777.07px;"><span style="color:#c8c8ff">B0</span><span style="color:#8383d0">01</span></div>
<div class="m" style="left:826.50px;top:777.07px;"><span style="color:#36b0e3">mov</span></div>
<div class="m" style="left:948.00px;top:777.07px;"><span style="color:#c775bf">al</span><span style="color:#e6e6e6">,</span> <span style="color:#cf99e8">1</span></div>
<div style="left:12.00px;top:819.00px;width:1452.00px;height:1.00px;background:rgba(255,255,255,0.035);"></div>
<div class="m" style="left:110.30px;top:800.07px;"><span style="color:#8a8a8a">+174</span></div>
<div style="left:188.30px;top:796.80px;width:17.40px;height:17.50px;background:#64aa82;border:1px solid rgba(85,80,100,0.9);border-radius:3.5px;box-sizing:border-box"></div>
<div class="m" style="left:206.00px;top:800.07px;"><span style="color:#8c8c8c">…t\TracyProfiler.cpp:3401</span></div>
<div class="m" style="left:525.00px;top:800.07px;"><span style="color:#c8c8ff">E9</span><span style="color:#8383d0">B8</span><span style="color:#c8c8ff">01</span><span style="color:#8383d0">00</span><span style="color:#c8c8ff">00</span></div>
<div class="m" style="left:826.50px;top:800.07px;"><span style="color:#eba040">jmp</span></div>
<div class="m" style="left:948.00px;top:800.07px;"><span style="color:#a3d1ff">.L13</span><span style="color:#808080">  -&gt; [tracy::Profiler::HandleServerQuery]</span></div>
<div style="left:12.00px;top:842.00px;width:1452.00px;height:1.00px;background:rgba(255,255,255,0.035);"></div>
<div class="m" style="left:110.30px;top:823.07px;"><span style="color:#8a8a8a">+179</span></div>
<div style="left:188.30px;top:819.80px;width:17.40px;height:17.50px;background:#96a860;border:1px solid rgba(85,80,100,0.9);border-radius:3.5px;box-sizing:border-box"></div>
<div class="m" style="left:206.00px;top:823.07px;"><span style="color:#8c8c8c">…1103\include\atomic:1048</span></div>
<div class="m" style="left:525.00px;top:823.07px;"><span style="color:#c8c8ff">48</span><span style="color:#8383d0">8B</span><span style="color:#c8c8ff">05</span><span style="color:#8383d0">B6</span><span style="color:#c8c8ff">3C</span><span style="color:#8383d0">10</span><span style="color:#c8c8ff">00</span></div>
<div class="m" style="left:826.50px;top:823.07px;opacity:0.55;"><span style="color:#36b0e3">mov</span></div>
<div class="m" style="left:948.00px;top:823.07px;"><span style="color:rgba(199,117,191,0.55)">rax</span><span style="color:rgba(230,230,230,0.55)">,</span> <span style="color:rgba(115,173,82,0.55)">qword</span> <span style="color:rgba(115,173,82,0.55)">ptr</span> <span style="color:rgba(230,230,230,0.55)">[</span><span style="color:rgba(199,117,191,0.55)">rip</span> <span style="color:rgba(230,230,230,0.55)">+</span> <span style="color:rgba(207,153,232,0.55)">0x103cb6</span><span style="color:rgba(230,230,230,0.55)">]</span><span style="color:#c4c4c4">  ; .L1</span></div>
<div style="left:12.00px;top:865.00px;width:1452.00px;height:1.00px;background:rgba(255,255,255,0.035);"></div>
<div class="m" style="left:110.30px;top:846.07px;"><span style="color:#8a8a8a">+186</span></div>
<div style="left:188.30px;top:842.80px;width:17.40px;height:17.50px;background:#60b07e;border:1px solid rgba(85,80,100,0.9);border-radius:3.5px;box-sizing:border-box"></div>
<div class="m" style="left:206.00px;top:846.07px;"><span style="color:#8c8c8c">…mon\TracySystem.cpp:197</span></div>
<div class="m" style="left:525.00px;top:846.07px;"><span style="color:#c8c8ff">44</span><span style="color:#8383d0">8B</span><span style="color:#c8c8ff">45</span><span style="color:#8383d0">98</span></div>
<div class="m" style="left:826.50px;top:846.07px;opacity:0.55;"><span style="color:#36b0e3">mov</span></div>
<div class="m" style="left:948.00px;top:846.07px;"><span style="color:rgba(199,117,191,0.55)">r8d</span><span style="color:rgba(230,230,230,0.55)">,</span> <span style="color:rgba(115,173,82,0.55)">dword</span> <span style="color:rgba(115,173,82,0.55)">ptr</span> <span style="color:rgba(230,230,230,0.55)">[</span><span style="color:rgba(199,117,191,0.55)">rbp</span> <span style="color:rgba(230,230,230,0.55)">-</span> <span style="color:rgba(207,153,232,0.55)">0x68</span><span style="color:rgba(230,230,230,0.55)">]</span></div>
<div style="left:12.00px;top:888.00px;width:1452.00px;height:1.00px;background:rgba(255,255,255,0.035);"></div>
<div class="m" style="left:110.30px;top:869.07px;"><span style="color:#8a8a8a">+190</span></div>
<div style="left:188.30px;top:865.80px;width:17.40px;height:17.50px;background:#60b07e;border:1px solid rgba(85,80,100,0.9);border-radius:3.5px;box-sizing:border-box"></div>
<div class="m" style="left:206.00px;top:869.07px;"><span style="color:#8c8c8c">…mon\TracySystem.cpp:197</span></div>
<div class="m" style="left:525.00px;top:869.07px;"><span style="color:#c8c8ff">48</span><span style="color:#8383d0">85</span><span style="color:#c8c8ff">C0</span></div>
<div class="m" style="left:826.50px;top:869.07px;opacity:0.55;"><span style="color:#36b0e3">test</span></div>
<div class="m" style="left:948.00px;top:869.07px;"><span style="color:rgba(199,117,191,0.55)">rax</span><span style="color:rgba(230,230,230,0.55)">,</span> <span style="color:rgba(199,117,191,0.55)">rax</span></div>
<div style="left:12.00px;top:911.00px;width:1452.00px;height:1.00px;background:rgba(255,255,255,0.035);"></div>
<div class="m" style="left:110.30px;top:892.07px;"><span style="color:#8a8a8a">+193</span></div>
<div style="left:188.30px;top:888.80px;width:17.40px;height:17.50px;background:#60b07e;border:1px solid rgba(85,80,100,0.9);border-radius:3.5px;box-sizing:border-box"></div>
<div class="m" style="left:206.00px;top:892.07px;"><span style="color:#8c8c8c">…mon\TracySystem.cpp:197</span></div>
<div class="m" style="left:525.00px;top:892.07px;"><span style="color:#c8c8ff">74</span><span style="color:#8383d0">0E</span></div>
<div class="m" style="left:826.50px;top:892.07px;opacity:0.55;"><span style="color:#eba040">je</span></div>
<div class="m" style="left:948.00px;top:892.07px;"><span style="color:rgba(163,209,255,0.55)">.L3</span><span style="color:#808080">  -&gt; [tracy::GetThreadName]</span></div>
<div style="left:12.00px;top:934.00px;width:1452.00px;height:1.00px;background:rgba(255,255,255,0.035);"></div>
<div class="m" style="left:110.30px;top:915.07px;"><span style="color:#8a8a8a">+195</span></div>
<div style="left:188.30px;top:911.80px;width:17.40px;height:17.50px;background:#60b07e;border:1px solid rgba(85,80,100,0.9);border-radius:3.5px;box-sizing:border-box"></div>
<div class="m" style="left:206.00px;top:915.07px;"><span style="color:#8c8c8c">…mon\TracySystem.cpp:199</span></div>
<div class="m" style="left:525.00px;top:915.07px;"><span style="color:#c8c8ff">44</span><span style="color:#8383d0">39</span><span style="color:#c8c8ff">00</span></div>
<div class="m" style="left:826.50px;top:915.07px;opacity:0.55;"><span style="color:#36b0e3">cmp</span></div>
<div class="m" style="left:948.00px;top:915.07px;"><span style="color:rgba(115,173,82,0.55)">dword</span> <span style="color:rgba(115,173,82,0.55)">ptr</span> <span style="color:rgba(230,230,230,0.55)">[</span><span style="color:rgba(199,117,191,0.55)">rax</span><span style="color:rgba(230,230,230,0.55)">]</span><span style="color:rgba(230,230,230,0.55)">,</span> <span style="color:rgba(199,117,191,0.55)">r8d</span><span style="color:#c4c4c4">  ; .L2</span></div>
<div style="left:12.00px;top:957.00px;width:1452.00px;height:1.00px;background:rgba(255,255,255,0.035);"></div>
<div class="m" style="left:110.30px;top:938.07px;"><span style="color:#8a8a8a">+198</span></div>
<div style="left:188.30px;top:934.80px;width:17.40px;height:17.50px;background:#60b07e;border:1px solid rgba(85,80,100,0.9);border-radius:3.5px;box-sizing:border-box"></div>
<div class="m" style="left:206.00px;top:938.07px;"><span style="color:#8c8c8c">…mon\TracySystem.cpp:199</span></div>
<div class="m" style="left:525.00px;top:938.07px;"><span style="color:#c8c8ff">74</span><span style="color:#8383d0">4C</span></div>
<div class="m" style="left:826.50px;top:938.07px;opacity:0.55;"><span style="color:#eba040">je</span></div>
<div class="m" style="left:948.00px;top:938.07px;"><span style="color:rgba(163,209,255,0.55)">.L6</span><span style="color:#808080">  -&gt; [tracy::GetThreadName]</span></div>
<div style="left:12.00px;top:980.00px;width:1452.00px;height:1.00px;background:rgba(255,255,255,0.035);"></div>
<div class="m" style="left:110.30px;top:961.07px;"><span style="color:#8a8a8a">+200</span></div>
<div style="left:188.30px;top:957.80px;width:17.40px;height:17.50px;background:#60b07e;border:1px solid rgba(85,80,100,0.9);border-radius:3.5px;box-sizing:border-box"></div>
<div class="m" style="left:206.00px;top:961.07px;"><span style="color:#8c8c8c">…mon\TracySystem.cpp:203</span></div>
<div class="m" style="left:525.00px;top:961.07px;"><span style="color:#c8c8ff">48</span><span style="color:#8383d0">8B</span><span style="color:#c8c8ff">40</span><span style="color:#8383d0">10</span></div>
<div class="m" style="left:826.50px;top:961.07px;opacity:0.55;"><span style="color:#36b0e3">mov</span></div>
<div class="m" style="left:948.00px;top:961.07px;"><span style="color:rgba(199,117,191,0.55)">rax</span><span style="color:rgba(230,230,230,0.55)">,</span> <span style="color:rgba(115,173,82,0.55)">qword</span> <span style="color:rgba(115,173,82,0.55)">ptr</span> <span style="color:rgba(230,230,230,0.55)">[</span><span style="color:rgba(199,117,191,0.55)">rax</span> <span style="color:rgba(230,230,230,0.55)">+</span> <span style="color:rgba(207,153,232,0.55)">0x10</span><span style="color:rgba(230,230,230,0.55)">]</span></div>
<div style="left:12.00px;top:1003.00px;width:1452.00px;height:1.00px;background:rgba(255,255,255,0.035);"></div>
<div class="m" style="left:110.30px;top:984.07px;"><span style="color:#8a8a8a">+204</span></div>
<div style="left:188.30px;top:980.80px;width:17.40px;height:17.50px;background:#60b07e;border:1px solid rgba(85,80,100,0.9);border-radius:3.5px;box-sizing:border-box"></div>
<div class="m" style="left:206.00px;top:984.07px;"><span style="color:#8c8c8c">…mon\TracySystem.cpp:203</span></div>
<div class="m" style="left:525.00px;top:984.07px;"><span style="color:#c8c8ff">48</span><span style="color:#8383d0">85</span><span style="color:#c8c8ff">C0</span></div>
<div class="m" style="left:826.50px;top:984.07px;opacity:0.55;"><span style="color:#36b0e3">test</span></div>
<div class="m" style="left:948.00px;top:984.07px;"><span style="color:rgba(199,117,191,0.55)">rax</span><span style="color:rgba(230,230,230,0.55)">,</span> <span style="color:rgba(199,117,191,0.55)">rax</span></div>
<div style="left:12.00px;top:1026.00px;width:1452.00px;height:1.00px;background:rgba(255,255,255,0.035);"></div>
<div class="m" style="left:110.30px;top:1007.07px;"><span style="color:#8a8a8a">+207</span></div>
<div style="left:188.30px;top:1003.80px;width:17.40px;height:17.50px;background:#60b07e;border:1px solid rgba(85,80,100,0.9);border-radius:3.5px;box-sizing:border-box"></div>
<div class="m" style="left:206.00px;top:1007.07px;"><span style="color:#8c8c8c">…mon\TracySystem.cpp:203</span></div>
<div class="m" style="left:525.00px;top:1007.07px;"><span style="color:#c8c8ff">75</span><span style="color:#8383d0">F2</span></div>
<div class="m" style="left:826.50px;top:1007.07px;opacity:0.55;"><span style="color:#eba040">jne</span></div>
<div class="m" style="left:948.00px;top:1007.07px;"><span style="color:rgba(163,209,255,0.55)">.L2</span><span style="color:#808080">  -&gt; [tracy::GetThreadName]</span></div>
<div style="left:12.00px;top:1049.00px;width:1452.00px;height:1.00px;background:rgba(255,255,255,0.035);"></div>
<div class="m" style="left:110.30px;top:1030.07px;"><span style="color:#8a8a8a">+209</span></div>
<div style="left:188.30px;top:1026.80px;width:17.40px;height:17.50px;background:#60b07e;border:1px solid rgba(85,80,100,0.9);border-radius:3.5px;box-sizing:border-box"></div>
<div class="m" style="left:206.00px;top:1030.07px;"><span style="color:#8c8c8c">…mon\TracySystem.cpp:258</span></div>
<div class="m" style="left:525.00px;top:1030.07px;"><span style="color:#c8c8ff">48</span><span style="color:#8383d0">8D</span><span style="color:#c8c8ff">35</span><span style="color:#8383d0">E8</span><span style="color:#c8c8ff">86</span><span style="color:#8383d0">10</span><span style="color:#c8c8ff">00</span></div>
<div class="m" style="left:826.50px;top:1030.07px;opacity:0.55;"><span style="color:#36b0e3">lea</span></div>
<div class="m" style="left:948.00px;top:1030.07px;"><span style="color:rgba(199,117,191,0.55)">rsi</span><span style="color:rgba(230,230,230,0.55)">,</span> <span style="color:rgba(230,230,230,0.55)">[</span><span style="color:rgba(199,117,191,0.55)">rip</span> <span style="color:rgba(230,230,230,0.55)">+</span> <span style="color:rgba(207,153,232,0.55)">0x1086e8</span><span style="color:rgba(230,230,230,0.55)">]</span><span style="color:#c4c4c4">  ; .L3</span></div>
<div style="left:12.00px;top:1072.00px;width:1452.00px;height:1.00px;background:rgba(255,255,255,0.035);"></div>
<div class="m" style="left:110.30px;top:1053.07px;"><span style="color:#8a8a8a">+216</span></div>
<div style="left:188.30px;top:1049.80px;width:17.40px;height:17.50px;background:#60b07e;border:1px solid rgba(85,80,100,0.9);border-radius:3.5px;box-sizing:border-box"></div>
<div class="m" style="left:206.00px;top:1053.07px;"><span style="color:#8c8c8c">…mon\TracySystem.cpp:258</span></div>
<div class="m" style="left:525.00px;top:1053.07px;"><span style="color:#c8c8ff">48</span><span style="color:#8383d0">8B</span><span style="color:#c8c8ff">CE</span></div>
<div class="m" style="left:826.50px;top:1053.07px;opacity:0.55;"><span style="color:#36b0e3">mov</span></div>
<div class="m" style="left:948.00px;top:1053.07px;"><span style="color:rgba(199,117,191,0.55)">rcx</span><span style="color:rgba(230,230,230,0.55)">,</span> <span style="color:rgba(199,117,191,0.55)">rsi</span></div>
<div style="left:779.00px;top:94.60px;width:41.00px;height:1.00px;background:#5c9ec2;"></div>
<div style="left:778.50px;top:95.10px;width:1.00px;height:977.90px;background:#5c9ec2;"></div>
<div style="left:761.00px;top:209.60px;width:59.00px;height:1.00px;background:#5c9ec2;"></div>
<div style="left:760.50px;top:210.10px;width:1.00px;height:862.90px;background:#5c9ec2;"></div>
<svg style="position:absolute;left:817.00px;top:297.60px;" width="8.00" height="9.00" viewBox="0 0 8 9"><path d="M7,0.5 L1,4.5 L7,8.5 M1,4.5 H8" fill="none" stroke="#3f5a9a" stroke-width="1.2"/></svg>
<div style="left:805.50px;top:348.10px;width:1.00px;height:46.00px;background:#a08c5a;"></div>
<div style="left:806.00px;top:347.60px;width:14.00px;height:1.00px;background:#a08c5a;"></div>
<svg style="position:absolute;left:814.00px;top:343.60px;" width="8.00" height="9.00" viewBox="0 0 8 9"><path d="M1,0.5 L7,4.5 L1,8.5 M0,4.5 H7" fill="none" stroke="#a08c5a" stroke-width="1.2"/></svg>
<div style="left:806.00px;top:393.60px;width:14.00px;height:1.00px;background:#a08c5a;"></div>
<svg style="position:absolute;left:817.00px;top:44.60px;" width="8.00" height="9.00" viewBox="0 0 8 9"><path d="M7,0.5 L1,4.5 L7,8.5 M1,4.5 H8" fill="none" stroke="#6a9a50" stroke-width="1.2"/></svg>
<svg style="position:absolute;left:817.00px;top:504.60px;" width="8.00" height="9.00" viewBox="0 0 8 9"><path d="M7,0.5 L1,4.5 L7,8.5 M1,4.5 H8" fill="none" stroke="#8a5080" stroke-width="1.2"/></svg>
<svg style="position:absolute;left:817.00px;top:757.60px;" width="8.00" height="9.00" viewBox="0 0 8 9"><path d="M7,0.5 L1,4.5 L7,8.5 M1,4.5 H8" fill="none" stroke="#b06090" stroke-width="1.2"/></svg>
<div style="left:770.60px;top:554.60px;width:49.40px;height:1.00px;background:#7cbf50;"></div>
<div style="left:770.10px;top:555.10px;width:1.00px;height:517.90px;background:#7cbf50;"></div>
<div style="left:770.60px;top:807.60px;width:49.40px;height:1.00px;background:#7cbf50;"></div>
<div style="left:806.40px;top:623.60px;width:13.60px;height:1.00px;background:#c0608a;"></div>
<div style="left:805.90px;top:624.10px;width:1.00px;height:207.00px;background:#c0608a;"></div>
<div style="left:806.40px;top:830.60px;width:13.60px;height:1.00px;background:#7e5068;"></div>
<svg style="position:absolute;left:814.00px;top:826.60px;" width="8.00" height="9.00" viewBox="0 0 8 9"><path d="M1,0.5 L7,4.5 L1,8.5 M0,4.5 H7" fill="none" stroke="#7e5068" stroke-width="1.2"/></svg>
<div style="left:797.30px;top:899.60px;width:22.70px;height:1.00px;background:#7e5068;"></div>
<div style="left:796.80px;top:900.10px;width:1.00px;height:138.00px;background:#7e5068;"></div>
<div style="left:797.30px;top:1037.60px;width:22.70px;height:1.00px;background:#7e5068;"></div>
<svg style="position:absolute;left:814.00px;top:1033.60px;" width="8.00" height="9.00" viewBox="0 0 8 9"><path d="M1,0.5 L7,4.5 L1,8.5 M0,4.5 H7" fill="none" stroke="#7e5068" stroke-width="1.2"/></svg>
<div style="left:806.40px;top:922.60px;width:13.60px;height:1.00px;background:#4f7a58;"></div>
<div style="left:805.90px;top:923.10px;width:1.00px;height:92.00px;background:#4f7a58;"></div>
<svg style="position:absolute;left:814.00px;top:918.60px;" width="8.00" height="9.00" viewBox="0 0 8 9"><path d="M1,0.5 L7,4.5 L1,8.5 M0,4.5 H7" fill="none" stroke="#4f7a58" stroke-width="1.2"/></svg>
<div style="left:806.40px;top:1014.60px;width:13.60px;height:1.00px;background:#4f7a58;"></div>
<div style="left:788.50px;top:945.60px;width:31.50px;height:1.00px;background:#7d6cc0;"></div>
<div style="left:788.00px;top:946.10px;width:1.00px;height:126.90px;background:#7d6cc0;"></div>
</div>
<div style="left:2683.00px;top:325.50px;width:20.00px;height:1072.00px;background:rgba(255,255,255,0.03);"></div>
<div style="left:2685.00px;top:348.00px;width:16.00px;height:114.50px;background:#4f4f4f;border-radius:8px"></div>
<div style="left:2691.00px;top:326.00px;width:4.00px;height:5.00px;background:#6a2020;"></div>
<div style="left:2691.00px;top:344.00px;width:4.00px;height:4.00px;background:#6a2020;"></div>
<div style="left:2691.00px;top:350.00px;width:4.00px;height:5.00px;background:#ffff90;"></div>
<div style="left:2691.00px;top:359.40px;width:4.00px;height:4.20px;background:#ff0000;"></div>
<div style="left:2691.00px;top:373.00px;width:4.00px;height:4.00px;background:#6a2020;"></div>
<div style="left:2691.00px;top:713.00px;width:4.00px;height:5.00px;background:#8a2020;"></div>
<div style="left:2691.00px;top:844.00px;width:4.00px;height:5.00px;background:#8a2020;"></div>
<div style="left:2691.00px;top:1043.00px;width:4.00px;height:5.00px;background:#ffff20;"></div>
<div style="left:2691.00px;top:1099.00px;width:4.00px;height:5.00px;background:#8a2020;"></div>
<div style="left:2691.00px;top:1142.00px;width:4.00px;height:5.00px;background:#8a2020;"></div>
<div style="left:2682.00px;top:353.50px;width:21.50px;height:1.00px;background:rgba(80,160,170,0.75);"></div>
<div style="left:2682.00px;top:356.00px;width:21.50px;height:1.00px;background:rgba(80,160,170,0.75);"></div>
<div style="left:2682.00px;top:358.50px;width:21.50px;height:1.00px;background:rgba(80,160,170,0.75);"></div>
<div style="left:2682.00px;top:361.00px;width:21.50px;height:1.00px;background:rgba(80,160,170,0.75);"></div>
<div style="left:2682.00px;top:363.50px;width:21.50px;height:1.00px;background:rgba(80,160,170,0.75);"></div>
<div style="left:2682.00px;top:366.00px;width:21.50px;height:1.00px;background:rgba(80,160,170,0.75);"></div>
<div style="left:2682.00px;top:368.50px;width:21.50px;height:1.00px;background:rgba(80,160,170,0.75);"></div>
<div style="left:2682.00px;top:371.00px;width:21.50px;height:1.00px;background:rgba(80,160,170,0.75);"></div>
<div style="left:2682.00px;top:373.50px;width:21.50px;height:1.00px;background:rgba(80,160,170,0.75);"></div></div></body></html>
